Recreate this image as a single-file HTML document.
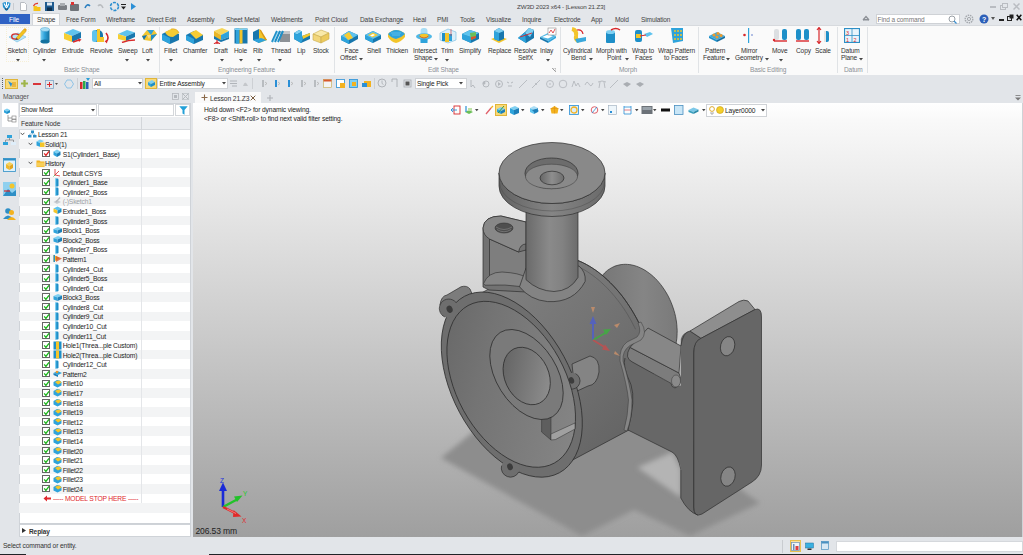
<!DOCTYPE html>
<html><head><meta charset="utf-8">
<style>
*{margin:0;padding:0;box-sizing:border-box}
html,body{width:1023px;height:555px;overflow:hidden;background:#e3e6ea;font-family:"Liberation Sans",sans-serif;position:relative}
.a{position:absolute;display:block}
.t{position:absolute;white-space:nowrap;line-height:7px;font-family:"Liberation Sans",sans-serif}
</style></head><body>
<div class="a" style="left:0px;top:0px;width:1023px;height:13px;background:#e3e6ea;"></div>
<svg class="a" style="left:2px;top:1px;" width="9" height="10" viewBox="0 0 9 10"><path d="M0.5,2 Q4.5,0 8.5,2 L8,6 Q6,9 4.5,10 Q3,9 1,6Z" fill="#1e8fcf"/><path d="M2,2.5 L4.5,7 L7,2.5 M4.5,1 V5" stroke="#fff" stroke-width="1.1" fill="none"/><path d="M3,8 L6,8" stroke="#234" stroke-width="1"/></svg>
<div class="a" style="left:13px;top:3px;width:1px;height:7px;background:#c9ccd0;"></div>
<svg class="a" style="left:20px;top:2px;" width="7" height="9" viewBox="0 0 7 9"><path d="M0.5,0.5 H4.5 L6.5,2.5 V8.5 H0.5Z" fill="#fff" stroke="#b8bcc2" stroke-width="1"/></svg>
<svg class="a" style="left:33px;top:1.5px;" width="8" height="9" viewBox="0 0 8 9"><path d="M0.5,4 H3.5 L4.5,5 H7.5 V9 H0.5Z" fill="#f5c318"/><path d="M0.5,4 Q2,1 5,1.5" stroke="#e03a2a" stroke-width="1.3" fill="none"/></svg>
<svg class="a" style="left:45px;top:2px;" width="9" height="9" viewBox="0 0 9 9"><rect x="0" y="0" width="9" height="9" fill="#1f5b8f"/><rect x="2" y="0.5" width="5" height="3" fill="#dfe8f0"/><rect x="2" y="5.5" width="5" height="3.5" fill="#0e2f4d"/></svg>
<svg class="a" style="left:58px;top:3px;" width="9" height="8" viewBox="0 0 9 8"><rect x="0" y="2" width="9" height="5" rx="1" fill="#7a7e84"/><rect x="2" y="0" width="5" height="3" fill="#a9adb2"/></svg>
<svg class="a" style="left:70px;top:2px;" width="9" height="9" viewBox="0 0 9 9"><rect x="0" y="2" width="9" height="7" rx="1" fill="#6f7379"/><rect x="1" y="0" width="3" height="3" fill="#d33"/></svg>
<svg class="a" style="left:84px;top:3px;" width="7" height="6" viewBox="0 0 7 6"><path d="M1,5 Q3,0 6,3" fill="none" stroke="#2c7fc0" stroke-width="1.6"/></svg>
<svg class="a" style="left:97px;top:3px;" width="7" height="6" viewBox="0 0 7 6"><path d="M6,5 Q4,0 1,3" fill="none" stroke="#b9bcc0" stroke-width="1.6"/></svg>
<svg class="a" style="left:109px;top:1px;" width="11" height="11" viewBox="0 0 11 11"><circle cx="5.5" cy="5.5" r="4" fill="none" stroke="#2d8fd0" stroke-width="1.6" stroke-dasharray="3 1.2"/></svg>
<svg class="a" style="left:121px;top:4px;" width="5" height="6" viewBox="0 0 5 6"><rect x="0" y="0" width="5" height="1" fill="#222"/><path d="M0,2.5 H5 L2.5,5.5Z" fill="#222"/></svg>
<svg class="a" style="left:131px;top:3px;" width="5" height="7" viewBox="0 0 5 7"><path d="M0,0 L5,3.5 L0,7Z" fill="#2a8fd6"/></svg>
<div class="t" style="left:517px;top:2.50px;font-size:6.24px;letter-spacing:-0.12px;color:#444;">ZW3D 2023 x64 - [Lesson 21.Z3]</div>
<div class="a" style="left:990px;top:6px;width:6px;height:2px;background:#fff;border:1px solid #b9bcc1"></div>
<svg class="a" style="left:1000px;top:3px;" width="8" height="7" viewBox="0 0 8 7"><rect x="0.5" y="2.5" width="5" height="4" fill="none" stroke="#b9bcc1"/><rect x="2.5" y="0.5" width="5" height="4" fill="#e3e6ea" stroke="#b9bcc1"/></svg>
<svg class="a" style="left:1013px;top:3px;" width="7" height="7" viewBox="0 0 7 7"><path d="M0.5,0.5 L6.5,6.5 M6.5,0.5 L0.5,6.5" stroke="#b9bcc1" stroke-width="1.5"/></svg>
<div class="a" style="left:0px;top:13.5px;width:30px;height:10.5px;background:#2f62c4;"></div>
<div class="t" style="left:9px;top:16.10px;font-size:6.55px;letter-spacing:-0.12px;color:#ffffff;">File</div>
<div class="a" style="left:32px;top:13px;width:28px;height:12px;background:#fafafa;border:1px solid #d3d6da;border-bottom:none"></div>
<div class="t" style="left:37px;top:16.10px;font-size:6.55px;letter-spacing:-0.12px;color:#333;">Shape</div>
<div class="t" style="left:66px;top:16.10px;font-size:6.55px;letter-spacing:-0.12px;color:#444;">Free Form</div>
<div class="t" style="left:106px;top:16.10px;font-size:6.55px;letter-spacing:-0.12px;color:#444;">Wireframe</div>
<div class="t" style="left:147px;top:16.10px;font-size:6.55px;letter-spacing:-0.12px;color:#444;">Direct Edit</div>
<div class="t" style="left:187px;top:16.10px;font-size:6.55px;letter-spacing:-0.12px;color:#444;">Assembly</div>
<div class="t" style="left:226px;top:16.10px;font-size:6.55px;letter-spacing:-0.12px;color:#444;">Sheet Metal</div>
<div class="t" style="left:271px;top:16.10px;font-size:6.55px;letter-spacing:-0.12px;color:#444;">Weldments</div>
<div class="t" style="left:315px;top:16.10px;font-size:6.55px;letter-spacing:-0.12px;color:#444;">Point Cloud</div>
<div class="t" style="left:360px;top:16.10px;font-size:6.55px;letter-spacing:-0.12px;color:#444;">Data Exchange</div>
<div class="t" style="left:413px;top:16.10px;font-size:6.55px;letter-spacing:-0.12px;color:#444;">Heal</div>
<div class="t" style="left:437px;top:16.10px;font-size:6.55px;letter-spacing:-0.12px;color:#444;">PMI</div>
<div class="t" style="left:460px;top:16.10px;font-size:6.55px;letter-spacing:-0.12px;color:#444;">Tools</div>
<div class="t" style="left:486px;top:16.10px;font-size:6.55px;letter-spacing:-0.12px;color:#444;">Visualize</div>
<div class="t" style="left:522px;top:16.10px;font-size:6.55px;letter-spacing:-0.12px;color:#444;">Inquire</div>
<div class="t" style="left:554px;top:16.10px;font-size:6.55px;letter-spacing:-0.12px;color:#444;">Electrode</div>
<div class="t" style="left:591px;top:16.10px;font-size:6.55px;letter-spacing:-0.12px;color:#444;">App</div>
<div class="t" style="left:615px;top:16.10px;font-size:6.55px;letter-spacing:-0.12px;color:#444;">Mold</div>
<div class="t" style="left:641px;top:16.10px;font-size:6.55px;letter-spacing:-0.12px;color:#444;">Simulation</div>
<svg class="a" style="left:862px;top:15px;" width="8" height="6" viewBox="0 0 8 6"><path d="M1,5 L4,1.5 L7,5" fill="none" stroke="#8b8f95" stroke-width="1.2"/><rect x="1" y="4" width="6" height="1.5" fill="#8b8f95"/></svg>
<div class="a" style="left:875.5px;top:13.5px;width:84px;height:10px;background:#ffffff;border:1px solid #cfd2d6"></div>
<div class="t" style="left:877.5px;top:15.50px;font-size:6.55px;letter-spacing:-0.12px;color:#777;">Find a command</div>
<svg class="a" style="left:948px;top:14.5px;" width="9" height="9" viewBox="0 0 9 9"><circle cx="4" cy="4" r="3" fill="none" stroke="#9aa0a6" stroke-width="1"/><path d="M6,6 L8.5,8.5" stroke="#3b8fd0" stroke-width="1.2"/></svg>
<svg class="a" style="left:964px;top:14px;" width="10" height="10" viewBox="0 0 10 10"><circle cx="5" cy="5" r="3.8" fill="none" stroke="#a5a9ae" stroke-width="1.4" stroke-dasharray="1.5 0.8"/><circle cx="5" cy="5" r="1.6" fill="none" stroke="#a5a9ae"/></svg>
<svg class="a" style="left:979px;top:13.5px;" width="10" height="10" viewBox="0 0 10 10"><circle cx="5" cy="5" r="4.5" fill="#2c5fb8"/><text x="3" y="8" font-size="7" fill="#fff" font-family="Liberation Sans" font-weight="bold">?</text></svg>
<svg class="a" style="left:991px;top:17px;" width="4" height="3" viewBox="0 0 4 3"><path d="M0,0 H4 L2,3Z" fill="#555"/></svg>
<div class="a" style="left:999px;top:19px;width:5px;height:1.6px;background:#222;"></div>
<svg class="a" style="left:1007px;top:14px;" width="7" height="7" viewBox="0 0 7 7"><rect x="0.5" y="2.5" width="4" height="4" fill="none" stroke="#222" stroke-width="1"/><rect x="2.5" y="0.5" width="4" height="4" fill="#222"/></svg>
<svg class="a" style="left:1016px;top:14px;" width="6" height="7" viewBox="0 0 6 7"><path d="M0.7,0.7 L5.3,6.3 M5.3,0.7 L0.7,6.3" stroke="#111" stroke-width="1.5"/></svg>
<div class="a" style="left:0px;top:24.5px;width:1023px;height:50px;background:#fafafa;border-top:1px solid #d7dade"></div>
<div class="a" style="left:6px;top:27px;width:23px;height:35px;background:transparent;border:1px dotted #f6efd6"></div>
<svg class="a" style="left:8px;top:27px;" width="19" height="17" viewBox="0 0 19 17"><polygon points="1,10 10,6 18,10 9,15" fill="#b9e3f6" stroke="#6fb8e0" stroke-width="0.6"/><ellipse cx="7.5" cy="9.5" rx="3.8" ry="2.6" fill="none" stroke="#d8302c" stroke-width="1.4"/><path d="M8,11 L15.5,2.5 L18,4.5 L10.5,12.5Z" fill="#f4c21f" stroke="#b58a10" stroke-width="0.4"/><path d="M15.5,2.5 L17,1 L18.8,2.8 L18,4.5Z" fill="#e9a71a"/><path d="M8,11 L7.5,13 L10.5,12.5Z" fill="#555"/></svg>
<svg class="a" style="left:40px;top:27px;" width="10" height="17" viewBox="0 0 10 17"><defs><linearGradient id="rc" x1="0" x2="1"><stop offset="0" stop-color="#7fd0f2"/><stop offset="0.45" stop-color="#2ea3db"/><stop offset="1" stop-color="#13719f"/></linearGradient></defs><rect x="0.5" y="2.5" width="9" height="12" fill="url(#rc)"/><ellipse cx="5" cy="14.5" rx="4.5" ry="2" fill="#13719f"/><ellipse cx="5" cy="2.5" rx="4.5" ry="2" fill="#a8def5" stroke="#2e8fc6" stroke-width="0.4"/></svg>
<svg class="a" style="left:63px;top:28px;" width="19" height="16" viewBox="0 0 19 16"><polygon points="1,5 10,1 18,4 9,8" fill="#5ec3ee"/><polygon points="1,5 9,8 9,14 1,11" fill="#f6cf34"/><polygon points="9,8 18,4 18,10 9,14" fill="#1877ad"/><path d="M10,14 L16,12" stroke="#d92a2a" stroke-width="1.8"/><path d="M15,10.5 L18.5,11.5 L16,14Z" fill="#d92a2a"/></svg>
<svg class="a" style="left:90px;top:27px;" width="21" height="17" viewBox="0 0 21 17"><rect x="2" y="3" width="11" height="12" rx="5" fill="#1877ad"/><rect x="2" y="3" width="5" height="12" rx="2.5" fill="#5ec3ee"/><path d="M7,2 h3 v8 h4 v5 h-7z" fill="#f4c72b"/><path d="M16,6 Q20,11 16,15" fill="none" stroke="#d8282c" stroke-width="1.6"/><path d="M14.5,14 L17,16.5 L17.5,13Z" fill="#d8282c"/></svg>
<svg class="a" style="left:117px;top:29px;" width="19" height="14" viewBox="0 0 19 14"><polygon points="1,5 10,1 18,3.5 9,7.5" fill="#5ec3ee"/><polygon points="1,5 9,7.5 9,12 1,10" fill="#f6cf34"/><polygon points="9,7.5 18,3.5 18,8 9,12" fill="#1877ad"/><path d="M5,13.5 Q11,11 18,11" stroke="#d92a2a" stroke-width="1.5" fill="none"/></svg>
<svg class="a" style="left:141px;top:28px;" width="17" height="15" viewBox="0 0 17 15"><polygon points="1,8 6,2 13,2 16,6 10,13 3,12" fill="#f2c631"/><polygon points="6,2 13,2 10,7" fill="#2ea3db"/><polygon points="1,8 6,7 3,12" fill="#1877ad"/><polygon points="10,7 16,6 10,13" fill="#1e8fc8"/><polygon points="6,7 10,7 8,11" fill="#f9e08a"/></svg>
<div class="a" style="left:159px;top:27px;width:1px;height:46px;background:#e0e3e6;"></div>
<svg class="a" style="left:161px;top:27px;" width="19" height="17" viewBox="0 0 19 17"><path d="M1,7 L9,3 L18,7 L18,13 L9,17 L1,13Z" fill="#1877ad"/><path d="M1,7 L9,11 L9,17 L1,13Z" fill="#2ea3db"/><path d="M4,5 L10,2 Q16,1 18,6 L12,10 Q6,10 4,5Z" fill="#f6cc34"/><path d="M10,2 Q16,1 18,6" stroke="#d99a12" stroke-width="0.6" fill="none"/></svg>
<svg class="a" style="left:185px;top:28px;" width="19" height="16" viewBox="0 0 19 16"><path d="M1,7 L9,3 L18,7 L18,12 L9,16 L1,12Z" fill="#1877ad"/><path d="M1,7 L9,11 L9,16 L1,12Z" fill="#2ea3db"/><path d="M5,5 L11,2 L18,7 L11,11Z" fill="#f6cc34"/></svg>
<svg class="a" style="left:212px;top:27px;" width="18" height="17" viewBox="0 0 18 17"><polygon points="2,4 10,1 17,4 9,8" fill="#f6d65a"/><polygon points="2,4 9,8 9,13 2,10" fill="#e9b626"/><polygon points="9,8 17,4 17,10 9,13" fill="#2ea3db"/><polygon points="2,9 9,13 17,10 17,12 9,15 2,12" fill="#1877ad"/><path d="M5,13 L5,17 M5,15 L2,17 M5,15 L8,17" stroke="#d8282c" stroke-width="1.1"/></svg>
<svg class="a" style="left:234px;top:28px;" width="14" height="16" viewBox="0 0 14 16"><rect x="0.5" y="0.5" width="13" height="15" fill="#1877ad"/><rect x="2" y="0.5" width="3" height="15" fill="#2ea3db"/><rect x="5.5" y="0.5" width="3" height="15" fill="#f3c52a"/><rect x="0.5" y="0.5" width="13" height="1.5" fill="#7fd0f2"/></svg>
<svg class="a" style="left:252px;top:28px;" width="16" height="16" viewBox="0 0 16 16"><polygon points="1,4 7,1 7,15 1,12" fill="#1877ad"/><polygon points="7,1 15,12 7,15" fill="#f3c52a"/><polygon points="1,12 7,15 15,12 9,10" fill="#2ea3db"/><polygon points="7,1 9,2 15,12 13,12" fill="#d99a12"/></svg>
<svg class="a" style="left:271px;top:29px;" width="19" height="15" viewBox="0 0 19 15"><rect x="9" y="2" width="10" height="11" fill="#8d9196"/><rect x="9" y="2" width="10" height="3" fill="#c4c7cb"/><path d="M1,13 L6,2 M4,13 L9,2 M7,13 L12,2" stroke="#1e8fc8" stroke-width="2"/><path d="M2,13 L7,2" stroke="#7fd0f2" stroke-width="0.6"/></svg>
<svg class="a" style="left:293px;top:28px;" width="18" height="16" viewBox="0 0 18 16"><polygon points="1,5 6,2 9,3.5 9,8 17,5 17,11 8,15 1,11" fill="#1877ad"/><polygon points="1,5 6,2 9,3.5 4,6.5" fill="#7fd0f2"/><polygon points="1,5 4,6.5 4,12.5 1,11" fill="#2ea3db"/><polygon points="9,8 17,5 17,7.5 10,11" fill="#f4c82b"/><polygon points="4,6.5 9,3.5 9,8 10,11 8,15 4,12.5" fill="#2ea3db"/></svg>
<svg class="a" style="left:312px;top:28px;" width="18" height="16" viewBox="0 0 18 16"><polygon points="1,6 9,2 17,5 9,9" fill="#f9e9a8" stroke="#c7a94a" stroke-width="0.6"/><polygon points="1,6 9,9 9,15 1,12" fill="#f2d67a" stroke="#c7a94a" stroke-width="0.6"/><polygon points="9,9 17,5 17,11 9,15" fill="#ecca5c" stroke="#c7a94a" stroke-width="0.6"/></svg>
<div class="a" style="left:334px;top:27px;width:1px;height:46px;background:#e0e3e6;"></div>
<svg class="a" style="left:340px;top:28px;" width="19" height="16" viewBox="0 0 19 16"><path d="M1,8 L9,3 L18,7 L18,11 L9,16 L1,12Z" fill="#1877ad"/><path d="M1,8 L9,12 L9,16 L1,12Z" fill="#2ea3db"/><path d="M1,8 L9,3 L18,7 L9,12Z" fill="#5ec3ee"/><path d="M4,7 L9,4 L13,10 L8,12Z" fill="#f6cc34"/></svg>
<svg class="a" style="left:364px;top:28px;" width="18" height="16" viewBox="0 0 18 16"><path d="M1,7 L9,3 L17,7 L17,11 L9,15 L1,11Z" fill="#1877ad"/><path d="M1,7 L9,11 L9,15 L1,11Z" fill="#2ea3db"/><path d="M1,7 L9,3 L17,7 L9,11Z" fill="#5ec3ee"/><path d="M4,7 L9,4.5 L14,7 L9,9.5Z" fill="#f6cc34"/><path d="M6,7.5 L9,6 L11,7 L8,8.5Z" fill="#fff"/></svg>
<svg class="a" style="left:387px;top:27px;" width="19" height="17" viewBox="0 0 19 17"><path d="M1,7 Q5,3 9,3 Q14,3 18,7 L18,10 Q14,15 9,16 Q4,15 1,10Z" fill="#f3c52a"/><path d="M1,7 Q5,3 9,3 Q14,3 18,7 Q14,11 9,12 Q4,11 1,7Z" fill="#2ea3db"/><path d="M4,6 L14,6 M5,8 L13,8" stroke="#7fd0f2" stroke-width="0.6"/></svg>
<svg class="a" style="left:415px;top:27px;" width="18" height="17" viewBox="0 0 18 17"><rect x="5.5" y="1" width="7" height="15" rx="3" fill="#a8ddf5"/><ellipse cx="9" cy="9.5" rx="8" ry="3.2" fill="#4fb8e6"/><ellipse cx="9" cy="9" rx="4.5" ry="2.2" fill="#f3c52a"/><path d="M4.5,9 Q9,13 13.5,9" stroke="#c0392b" stroke-width="0.7" fill="none"/><rect x="5.5" y="12" width="7" height="4" fill="#2ea3db"/></svg>
<svg class="a" style="left:439px;top:28px;" width="18" height="16" viewBox="0 0 18 16"><polygon points="1,5 9,1 17,4 17,12 9,15 1,12" fill="#dbeef8" stroke="#6fb8e0" stroke-width="0.6"/><rect x="6" y="5" width="4" height="9" fill="#f3c52a"/><rect x="3" y="5" width="3" height="8" fill="#1e8fc8"/><rect x="10" y="6" width="3" height="7" fill="#2ea3db"/><path d="M12,1 V8" stroke="#d8282c" stroke-width="0.6"/></svg>
<svg class="a" style="left:461px;top:28px;" width="19" height="16" viewBox="0 0 19 16"><polygon points="1,6 9,2 18,5 18,11 10,15 1,11" fill="#1877ad"/><polygon points="1,6 10,9 10,15 1,11" fill="#2ea3db"/><polygon points="1,6 9,2 18,5 10,9" fill="#5ec3ee"/><polygon points="9,5 15,4 15,10 10,12" fill="#6bbf59"/><polygon points="10,9 15,8 15,10 10,12" fill="#d9542c"/></svg>
<svg class="a" style="left:490px;top:27px;" width="18" height="17" viewBox="0 0 18 17"><polygon points="1,12 9,9 17,12 9,16" fill="#f3c52a"/><polygon points="4,4 9,1 14,4 14,12 9,14 4,12" fill="#1877ad"/><polygon points="4,4 9,6 9,14 4,12" fill="#2ea3db"/><polygon points="4,4 9,1 14,4 9,6" fill="#7fd0f2"/></svg>
<svg class="a" style="left:517px;top:27px;" width="18" height="17" viewBox="0 0 18 17"><polygon points="1,11 8,5 12,1 17,3 17,11 9,16" fill="#1877ad"/><polygon points="1,11 8,5 9,16" fill="#2ea3db"/><polygon points="12,1 17,3 13,10 8,6" fill="#7fd0f2"/><path d="M3,10 L15,6" stroke="#d8282c" stroke-width="0.9"/></svg>
<svg class="a" style="left:539px;top:27px;" width="18" height="17" viewBox="0 0 18 17"><polygon points="1,10 9,6 17,9 9,14" fill="#4fb8e6"/><polygon points="1,10 9,14 9,16 1,12" fill="#1877ad"/><polygon points="9,14 17,9 17,11 9,16" fill="#2ea3db"/><polygon points="3,10 9,7.5 14,9 9,11.5" fill="#fff"/><rect x="9" y="1" width="8" height="7" fill="#fff" stroke="#777" stroke-width="0.5"/><path d="M10,6 L12,3 L14,6 L16,2" stroke="#d8282c" stroke-width="0.8" fill="none"/></svg>
<svg class="a" style="left:552px;top:68px;" width="4" height="4" viewBox="0 0 4 4"><path d="M0,0 H4 V4Z M1,1 L3,3" fill="none" stroke="#888" stroke-width="0.6"/></svg>
<div class="a" style="left:559.5px;top:27px;width:1px;height:46px;background:#e0e3e6;"></div>
<svg class="a" style="left:569px;top:27px;" width="18" height="17" viewBox="0 0 18 17"><path d="M3,2 Q8,3 7,9 Q6,13 10,14" fill="none" stroke="#f3c52a" stroke-width="4"/><polygon points="6,12 17,10 17,14 8,16" fill="#3aa8dc"/><path d="M8,3 Q13,2 14,7" fill="none" stroke="#d8282c" stroke-width="1.2"/></svg>
<svg class="a" style="left:604px;top:27px;" width="18" height="17" viewBox="0 0 18 17"><rect x="2" y="5" width="9" height="11" rx="1" fill="#1e8fc8"/><ellipse cx="6.5" cy="5" rx="4.5" ry="2" fill="#7fd0f2"/><path d="M7,3 Q12,0 16,3" fill="none" stroke="#d8282c" stroke-width="1.5"/></svg>
<svg class="a" style="left:634px;top:28px;" width="19" height="15" viewBox="0 0 19 15"><rect x="1" y="2" width="7" height="12" rx="2" fill="#1e8fc8"/><rect x="2" y="6" width="5" height="4" fill="#f3c52a"/><polygon points="10,6 16,4 19,6 13,9" fill="#5ec3ee"/><path d="M6,8 L12,7" stroke="#d8282c" stroke-width="1"/></svg>
<svg class="a" style="left:669px;top:27px;" width="16" height="17" viewBox="0 0 16 17"><polygon points="2,1 14,1 14,14 4,16" fill="#2ea3db"/><g fill="#f3c52a"><circle cx="6" cy="4" r="1"/><circle cx="9" cy="4" r="1"/><circle cx="12" cy="4" r="1"/><circle cx="6" cy="8" r="1"/><circle cx="9" cy="8" r="1"/><circle cx="12" cy="8" r="1"/><circle cx="6" cy="12" r="1"/><circle cx="9" cy="12" r="1"/><circle cx="12" cy="12" r="1"/></g></svg>
<div class="a" style="left:698px;top:27px;width:1px;height:46px;background:#e0e3e6;"></div>
<svg class="a" style="left:708px;top:28px;" width="18" height="14" viewBox="0 0 18 14"><polygon points="1,8 9,4 17,8 9,12" fill="#3aa8dc"/><polygon points="1,8 9,12 9,14 1,10" fill="#1e8fc8"/><polygon points="9,12 17,8 17,10 9,14" fill="#176ea0"/><g fill="#f09a2a"><circle cx="6" cy="7" r="1.6"/><circle cx="10" cy="5.5" r="1.6"/><circle cx="9" cy="9" r="1.6"/><circle cx="13" cy="7.5" r="1.6"/></g></svg>
<svg class="a" style="left:742px;top:27px;" width="11" height="17" viewBox="0 0 11 17"><rect x="6" y="1" width="1.2" height="15" fill="#2ea3db"/><circle cx="2.5" cy="8" r="1.3" fill="#d8282c"/><circle cx="10" cy="8" r="1" fill="#9ad"/></svg>
<svg class="a" style="left:772px;top:27px;" width="17" height="17" viewBox="0 0 17 17"><rect x="2" y="2" width="5" height="11" rx="2" fill="#dcdfe2"/><rect x="10" y="2" width="5" height="11" rx="2" fill="#1e8fc8"/><path d="M2,14 L15,14" stroke="#d8282c" stroke-width="1.4"/><circle cx="2" cy="13" r="1.2" fill="#d8282c"/></svg>
<svg class="a" style="left:795px;top:27px;" width="16" height="17" viewBox="0 0 16 17"><rect x="1" y="2" width="5" height="11" rx="2" fill="#1e8fc8"/><rect x="9" y="2" width="5" height="11" rx="2" fill="#1e8fc8"/><path d="M1,14 L14,14" stroke="#d8282c" stroke-width="1.4"/></svg>
<svg class="a" style="left:816px;top:27px;" width="15" height="17" viewBox="0 0 15 17"><path d="M3,1 L3,16 M1,3 L3,0.5 L5,3 M1,14 L3,16.5 L5,14" stroke="#d8282c" stroke-width="1.2" fill="none"/><rect x="8" y="4" width="5" height="11" rx="2" fill="#1e8fc8"/><rect x="8" y="4" width="2" height="11" fill="#e6e6e6"/></svg>
<div class="a" style="left:836.5px;top:27px;width:1px;height:46px;background:#e0e3e6;"></div>
<svg class="a" style="left:844px;top:28px;" width="16" height="15" viewBox="0 0 16 15"><rect x="0.5" y="0.5" width="15" height="14" fill="#e8f4fb" stroke="#2e8fc6" stroke-width="1.2"/><path d="M8,1 V14 M1,7.5 H15" stroke="#2e8fc6" stroke-width="0.8"/><text x="2" y="6.5" font-size="5.5" fill="#d8282c" font-family="Liberation Sans">3</text><text x="2" y="13.5" font-size="5.5" fill="#d8282c" font-family="Liberation Sans">1</text><text x="9.5" y="13.5" font-size="5.5" fill="#d8282c" font-family="Liberation Sans">2</text></svg>
<div class="a" style="left:866.5px;top:27px;width:1px;height:46px;background:#e0e3e6;"></div>
<div class="t" style="left:7.5px;top:46.80px;font-size:6.55px;letter-spacing:-0.12px;color:#333333;">Sketch</div>
<div class="t" style="left:33px;top:46.80px;font-size:6.55px;letter-spacing:-0.12px;color:#333333;">Cylinder</div>
<div class="t" style="left:62px;top:46.80px;font-size:6.55px;letter-spacing:-0.12px;color:#333333;">Extrude</div>
<div class="t" style="left:90px;top:46.80px;font-size:6.55px;letter-spacing:-0.12px;color:#333333;">Revolve</div>
<div class="t" style="left:118px;top:46.80px;font-size:6.55px;letter-spacing:-0.12px;color:#333333;">Sweep</div>
<div class="t" style="left:142px;top:46.80px;font-size:6.55px;letter-spacing:-0.12px;color:#333333;">Loft</div>
<div class="t" style="left:164px;top:46.80px;font-size:6.55px;letter-spacing:-0.12px;color:#333333;">Fillet</div>
<div class="t" style="left:183px;top:46.80px;font-size:6.55px;letter-spacing:-0.12px;color:#333333;">Chamfer</div>
<div class="t" style="left:214px;top:46.80px;font-size:6.55px;letter-spacing:-0.12px;color:#333333;">Draft</div>
<div class="t" style="left:234px;top:46.80px;font-size:6.55px;letter-spacing:-0.12px;color:#333333;">Hole</div>
<div class="t" style="left:253px;top:46.80px;font-size:6.55px;letter-spacing:-0.12px;color:#333333;">Rib</div>
<div class="t" style="left:271px;top:46.80px;font-size:6.55px;letter-spacing:-0.12px;color:#333333;">Thread</div>
<div class="t" style="left:297px;top:46.80px;font-size:6.55px;letter-spacing:-0.12px;color:#333333;">Lip</div>
<div class="t" style="left:313px;top:46.80px;font-size:6.55px;letter-spacing:-0.12px;color:#333333;">Stock</div>
<div class="t" style="left:344.5px;top:46.80px;font-size:6.55px;letter-spacing:-0.12px;color:#333333;">Face</div>
<div class="t" style="left:340px;top:54.30px;font-size:6.55px;letter-spacing:-0.12px;color:#333333;">Offset</div>
<div class="t" style="left:367px;top:46.80px;font-size:6.55px;letter-spacing:-0.12px;color:#333333;">Shell</div>
<div class="t" style="left:386px;top:46.80px;font-size:6.55px;letter-spacing:-0.12px;color:#333333;">Thicken</div>
<div class="t" style="left:413px;top:46.80px;font-size:6.55px;letter-spacing:-0.12px;color:#333333;">Intersect</div>
<div class="t" style="left:414px;top:54.30px;font-size:6.55px;letter-spacing:-0.12px;color:#333333;">Shape</div>
<div class="t" style="left:441px;top:46.80px;font-size:6.55px;letter-spacing:-0.12px;color:#333333;">Trim</div>
<div class="t" style="left:459px;top:46.80px;font-size:6.55px;letter-spacing:-0.12px;color:#333333;">Simplify</div>
<div class="t" style="left:488px;top:46.80px;font-size:6.55px;letter-spacing:-0.12px;color:#333333;">Replace</div>
<div class="t" style="left:514px;top:46.80px;font-size:6.55px;letter-spacing:-0.12px;color:#333333;">Resolve</div>
<div class="t" style="left:518px;top:54.30px;font-size:6.55px;letter-spacing:-0.12px;color:#333333;">SelfX</div>
<div class="t" style="left:540px;top:46.80px;font-size:6.55px;letter-spacing:-0.12px;color:#333333;">Inlay</div>
<div class="t" style="left:563px;top:46.80px;font-size:6.55px;letter-spacing:-0.12px;color:#333333;">Cylindrical</div>
<div class="t" style="left:571px;top:54.30px;font-size:6.55px;letter-spacing:-0.12px;color:#333333;">Bend</div>
<div class="t" style="left:596px;top:46.80px;font-size:6.55px;letter-spacing:-0.12px;color:#333333;">Morph with</div>
<div class="t" style="left:607px;top:54.30px;font-size:6.55px;letter-spacing:-0.12px;color:#333333;">Point</div>
<div class="t" style="left:632px;top:46.80px;font-size:6.55px;letter-spacing:-0.12px;color:#333333;">Wrap to</div>
<div class="t" style="left:635px;top:54.30px;font-size:6.55px;letter-spacing:-0.12px;color:#333333;">Faces</div>
<div class="t" style="left:658px;top:46.80px;font-size:6.55px;letter-spacing:-0.12px;color:#333333;">Wrap Pattern</div>
<div class="t" style="left:664px;top:54.30px;font-size:6.55px;letter-spacing:-0.12px;color:#333333;">to Faces</div>
<div class="t" style="left:705px;top:46.80px;font-size:6.55px;letter-spacing:-0.12px;color:#333333;">Pattern</div>
<div class="t" style="left:703px;top:54.30px;font-size:6.55px;letter-spacing:-0.12px;color:#333333;">Feature</div>
<div class="t" style="left:741px;top:46.80px;font-size:6.55px;letter-spacing:-0.12px;color:#333333;">Mirror</div>
<div class="t" style="left:735px;top:54.30px;font-size:6.55px;letter-spacing:-0.12px;color:#333333;">Geometry</div>
<div class="t" style="left:772px;top:46.80px;font-size:6.55px;letter-spacing:-0.12px;color:#333333;">Move</div>
<div class="t" style="left:796px;top:46.80px;font-size:6.55px;letter-spacing:-0.12px;color:#333333;">Copy</div>
<div class="t" style="left:815px;top:46.80px;font-size:6.55px;letter-spacing:-0.12px;color:#333333;">Scale</div>
<div class="t" style="left:841px;top:46.80px;font-size:6.55px;letter-spacing:-0.12px;color:#333333;">Datum</div>
<div class="t" style="left:841px;top:54.30px;font-size:6.55px;letter-spacing:-0.12px;color:#333333;">Plane</div>
<svg class="a" style="left:15.5px;top:59px;" width="4" height="3" viewBox="0 0 4 3"><path d="M0,0 H4 L2,2.5Z" fill="#444"/></svg>
<svg class="a" style="left:42px;top:59px;" width="4" height="3" viewBox="0 0 4 3"><path d="M0,0 H4 L2,2.5Z" fill="#444"/></svg>
<svg class="a" style="left:125px;top:59px;" width="4" height="3" viewBox="0 0 4 3"><path d="M0,0 H4 L2,2.5Z" fill="#444"/></svg>
<svg class="a" style="left:145.5px;top:59px;" width="4" height="3" viewBox="0 0 4 3"><path d="M0,0 H4 L2,2.5Z" fill="#444"/></svg>
<svg class="a" style="left:169px;top:59px;" width="4" height="3" viewBox="0 0 4 3"><path d="M0,0 H4 L2,2.5Z" fill="#444"/></svg>
<svg class="a" style="left:219.5px;top:59px;" width="4" height="3" viewBox="0 0 4 3"><path d="M0,0 H4 L2,2.5Z" fill="#444"/></svg>
<svg class="a" style="left:239px;top:59px;" width="4" height="3" viewBox="0 0 4 3"><path d="M0,0 H4 L2,2.5Z" fill="#444"/></svg>
<svg class="a" style="left:257px;top:59px;" width="4" height="3" viewBox="0 0 4 3"><path d="M0,0 H4 L2,2.5Z" fill="#444"/></svg>
<svg class="a" style="left:278px;top:59px;" width="4" height="3" viewBox="0 0 4 3"><path d="M0,0 H4 L2,2.5Z" fill="#444"/></svg>
<svg class="a" style="left:359px;top:57.5px;" width="4" height="3" viewBox="0 0 4 3"><path d="M0,0 H4 L2,2.5Z" fill="#444"/></svg>
<svg class="a" style="left:434px;top:57.5px;" width="4" height="3" viewBox="0 0 4 3"><path d="M0,0 H4 L2,2.5Z" fill="#444"/></svg>
<svg class="a" style="left:445px;top:59px;" width="4" height="3" viewBox="0 0 4 3"><path d="M0,0 H4 L2,2.5Z" fill="#444"/></svg>
<svg class="a" style="left:545.5px;top:59px;" width="4" height="3" viewBox="0 0 4 3"><path d="M0,0 H4 L2,2.5Z" fill="#444"/></svg>
<svg class="a" style="left:589px;top:57.5px;" width="4" height="3" viewBox="0 0 4 3"><path d="M0,0 H4 L2,2.5Z" fill="#444"/></svg>
<svg class="a" style="left:625px;top:57.5px;" width="4" height="3" viewBox="0 0 4 3"><path d="M0,0 H4 L2,2.5Z" fill="#444"/></svg>
<svg class="a" style="left:726px;top:57.5px;" width="4" height="3" viewBox="0 0 4 3"><path d="M0,0 H4 L2,2.5Z" fill="#444"/></svg>
<svg class="a" style="left:765px;top:57.5px;" width="4" height="3" viewBox="0 0 4 3"><path d="M0,0 H4 L2,2.5Z" fill="#444"/></svg>
<svg class="a" style="left:779px;top:59px;" width="4" height="3" viewBox="0 0 4 3"><path d="M0,0 H4 L2,2.5Z" fill="#444"/></svg>
<svg class="a" style="left:858.5px;top:57.5px;" width="4" height="3" viewBox="0 0 4 3"><path d="M0,0 H4 L2,2.5Z" fill="#444"/></svg>
<div class="t" style="left:64px;top:66.30px;font-size:6.55px;letter-spacing:-0.12px;color:#8a8f96;">Basic Shape</div>
<div class="t" style="left:218px;top:66.30px;font-size:6.55px;letter-spacing:-0.12px;color:#8a8f96;">Engineering Feature</div>
<div class="t" style="left:428px;top:66.30px;font-size:6.55px;letter-spacing:-0.12px;color:#8a8f96;">Edit Shape</div>
<div class="t" style="left:619px;top:66.30px;font-size:6.55px;letter-spacing:-0.12px;color:#8a8f96;">Morph</div>
<div class="t" style="left:750px;top:66.30px;font-size:6.55px;letter-spacing:-0.12px;color:#8a8f96;">Basic Editing</div>
<div class="t" style="left:844px;top:66.30px;font-size:6.55px;letter-spacing:-0.12px;color:#8a8f96;">Datum</div>
<div class="a" style="left:0px;top:74.5px;width:1023px;height:17.5px;background:#e2e5e9;"></div>
<div class="a" style="left:2px;top:78px;width:1px;height:1px;background:#5a5e64;"></div>
<div class="a" style="left:2px;top:80px;width:1px;height:1px;background:#5a5e64;"></div>
<div class="a" style="left:2px;top:82px;width:1px;height:1px;background:#5a5e64;"></div>
<div class="a" style="left:2px;top:84px;width:1px;height:1px;background:#5a5e64;"></div>
<div class="a" style="left:2px;top:86px;width:1px;height:1px;background:#5a5e64;"></div>
<div class="a" style="left:2px;top:88px;width:1px;height:1px;background:#5a5e64;"></div>
<div class="a" style="left:5px;top:78.5px;width:13px;height:10.5px;background:#f9d977;border:1px solid #e0b53a"></div>
<svg class="a" style="left:7px;top:80px;" width="10" height="8" viewBox="0 0 10 8"><path d="M1,1 L4,7 L5,4 L8,5Z" fill="#2a8fd6"/><rect x="5" y="2" width="4" height="5" fill="#e8a92a" opacity="0.7"/></svg>
<svg class="a" style="left:20px;top:79px;" width="9" height="9" viewBox="0 0 9 9"><path d="M4.5,1 V8 M1,4.5 H8" stroke="#9fb54a" stroke-width="2.2"/></svg>
<div class="a" style="left:33px;top:82.5px;width:8px;height:2px;background:#d8363a;"></div>
<svg class="a" style="left:45px;top:79px;" width="13" height="10" viewBox="0 0 13 10"><rect x="0.5" y="1.5" width="8" height="8" fill="none" stroke="#7fa6c8" stroke-width="0.8"/><path d="M4.5,3 V8 M2,5.5 H7" stroke="#d8282c" stroke-width="1"/><path d="M10,4 H13 L11.5,6Z" fill="#555"/></svg>
<svg class="a" style="left:64px;top:79px;" width="10" height="10" viewBox="0 0 10 10"><polygon points="3,1 7,1 9.5,5 7,9 3,9 0.5,5" fill="none" stroke="#8fc3e6" stroke-width="1"/></svg>
<div class="a" style="left:77px;top:78px;width:1px;height:11px;background:#cdd0d4;"></div>
<svg class="a" style="left:80px;top:78px;" width="10" height="11" viewBox="0 0 10 11"><rect x="0" y="4" width="2.5" height="7" fill="#d8282c"/><rect x="3" y="3" width="2.5" height="8" fill="#2eaa4a"/><rect x="6" y="4" width="2.5" height="7" fill="#2c5fb8"/><path d="M6,0 H10 L8,3Z" fill="#2a9fd6"/></svg>
<div class="a" style="left:92px;top:77.5px;width:51px;height:11.5px;background:#fff;border:1px solid #cfd2d6"></div>
<div class="t" style="left:94px;top:80.00px;font-size:6.55px;letter-spacing:-0.12px;color:#222;">All</div>
<svg class="a" style="left:138px;top:82px;" width="4" height="3" viewBox="0 0 4 3"><path d="M0,0 H4 L2,2.5Z" fill="#444"/></svg>
<div class="a" style="left:145px;top:77.5px;width:12px;height:11.5px;background:#f9d977;border:1px solid #e0b53a"></div>
<svg class="a" style="left:147px;top:79px;" width="9" height="9" viewBox="0 0 9 9"><polygon points="1,3 5,1 8,3 4,5" fill="#7fd0f2"/><polygon points="1,3 4,5 4,8 1,6" fill="#2ea3db"/><polygon points="4,5 8,3 8,6 4,8" fill="#1e8fc8"/></svg>
<div class="a" style="left:157px;top:77.5px;width:71px;height:11.5px;background:#fff;border:1px solid #cfd2d6"></div>
<div class="t" style="left:159.5px;top:80.00px;font-size:6.55px;letter-spacing:-0.12px;color:#222;">Entire Assembly</div>
<svg class="a" style="left:222px;top:82px;" width="4" height="3" viewBox="0 0 4 3"><path d="M0,0 H4 L2,2.5Z" fill="#444"/></svg>
<svg class="a" style="left:229px;top:78px;" width="9" height="10" viewBox="0 0 9 10"><path d="M1,3 H8 M1,5.5 H8 M3,8 H8" stroke="#b0b4b9" stroke-width="1"/></svg>
<svg class="a" style="left:241px;top:78px;" width="9" height="10" viewBox="0 0 9 10"><path d="M2,8 Q4,1 7,8Z" fill="#c4c7cb"/></svg>
<div class="a" style="left:252px;top:78px;width:1px;height:11px;background:#cdd0d4;"></div>
<svg class="a" style="left:261px;top:79px;" width="7" height="9" viewBox="0 0 7 9"><rect x="1" y="1" width="2" height="7" fill="#b8bcc0"/><path d="M4,3 L6,4.5 L4,6" stroke="#aaa" fill="none" stroke-width="0.7"/></svg>
<svg class="a" style="left:274px;top:79px;" width="7" height="9" viewBox="0 0 7 9"><rect x="1" y="1" width="2" height="7" fill="#2a8fd6"/><path d="M4,3 L6,4.5 L4,6" stroke="#aaa" fill="none" stroke-width="0.7"/></svg>
<svg class="a" style="left:287px;top:79px;" width="7" height="9" viewBox="0 0 7 9"><rect x="1" y="1" width="2" height="7" fill="#2a8fd6"/><path d="M4,3 L6,4.5 L4,6" stroke="#aaa" fill="none" stroke-width="0.7"/></svg>
<svg class="a" style="left:300px;top:79px;" width="7" height="9" viewBox="0 0 7 9"><rect x="1" y="1" width="2" height="7" fill="#b8bcc0"/><path d="M4,3 L6,4.5 L4,6" stroke="#aaa" fill="none" stroke-width="0.7"/></svg>
<svg class="a" style="left:313px;top:79px;" width="7" height="9" viewBox="0 0 7 9"><rect x="1" y="1" width="2" height="7" fill="#b8bcc0"/><path d="M4,3 L6,4.5 L4,6" stroke="#aaa" fill="none" stroke-width="0.7"/></svg>
<svg class="a" style="left:323px;top:79px;" width="9" height="9" viewBox="0 0 9 9"><rect x="0.5" y="0.5" width="8" height="8" fill="#f4f4f4" stroke="#c7a94a" stroke-width="0.6"/><rect x="0.5" y="0.5" width="8" height="2" fill="#d8582c"/></svg>
<svg class="a" style="left:336px;top:79px;" width="9" height="9" viewBox="0 0 9 9"><rect x="0.5" y="0.5" width="8" height="8" fill="#fff" stroke="#2a8fd6" stroke-width="0.8"/><rect x="4" y="4" width="5" height="5" fill="#f3b21f"/></svg>
<svg class="a" style="left:349px;top:79px;" width="9" height="9" viewBox="0 0 9 9"><rect x="0.5" y="0.5" width="8" height="8" fill="#7fd0f2" stroke="#2a8fd6" stroke-width="0.8"/><rect x="3" y="3" width="4" height="4" fill="#f3b21f"/></svg>
<svg class="a" style="left:362px;top:79px;" width="9" height="9" viewBox="0 0 9 9"><rect x="2" y="2" width="7" height="6" fill="#f3b21f"/><rect x="0" y="4" width="5" height="4" fill="#2a8fd6"/></svg>
<div class="a" style="left:374px;top:78px;width:1px;height:11px;background:#cdd0d4;"></div>
<svg class="a" style="left:377px;top:78px;" width="10" height="10" viewBox="0 0 10 10"><circle cx="5" cy="5" r="4" fill="none" stroke="#a9adb2" stroke-width="0.9"/><path d="M5,2.5 V5.5 L6.5,6.5" stroke="#a9adb2" fill="none" stroke-width="0.8"/></svg>
<svg class="a" style="left:391px;top:78px;" width="8" height="10" viewBox="0 0 8 10"><path d="M1,1 H6 V9 M1,1 V4" stroke="#a9adb2" fill="none" stroke-width="0.9"/></svg>
<svg class="a" style="left:403px;top:79px;" width="9" height="9" viewBox="0 0 9 9"><rect x="1" y="1" width="7" height="7" fill="none" stroke="#a9adb2" stroke-width="0.8"/><rect x="2.5" y="2.5" width="4" height="4" fill="#555"/></svg>
<div class="a" style="left:415px;top:77.5px;width:52px;height:11.5px;background:#fff;border:1px solid #cfd2d6"></div>
<div class="t" style="left:417px;top:80.00px;font-size:6.55px;letter-spacing:-0.12px;color:#222;">Single Pick</div>
<svg class="a" style="left:459px;top:82px;" width="4" height="3" viewBox="0 0 4 3"><path d="M0,0 H4 L2,2.5Z" fill="#444"/></svg>
<svg class="a" style="left:469px;top:79px;" width="10" height="10" viewBox="0 0 10 10"><path d="M2,1 L2,8 L4,6 L6,9" stroke="#b5b9be" fill="none" stroke-width="1"/></svg>
<svg class="a" style="left:481px;top:79px;" width="10" height="10" viewBox="0 0 10 10"><circle cx="5" cy="5" r="3" fill="none" stroke="#b5b9be" stroke-width="1"/><circle cx="3" cy="4" r="1.5" fill="#b5b9be"/></svg>
<svg class="a" style="left:494px;top:79px;" width="10" height="10" viewBox="0 0 10 10"><circle cx="5" cy="5" r="3.5" fill="none" stroke="#b5b9be" stroke-width="1"/><path d="M4,3 L7,5 L4,7Z" fill="#b5b9be"/></svg>
<svg class="a" style="left:505px;top:79px;" width="10" height="10" viewBox="0 0 10 10"><path d="M2,3 L4,4 M6,4 L8,3 M3,7 L7,7" stroke="#b5b9be" stroke-width="1"/></svg>
<svg class="a" style="left:518px;top:79px;" width="10" height="10" viewBox="0 0 10 10"><path d="M1,9 L9,1" stroke="#b5b9be" stroke-width="0.9"/></svg>
<svg class="a" style="left:531px;top:79px;" width="10" height="10" viewBox="0 0 10 10"><path d="M1,9 L9,1" stroke="#b5b9be" stroke-width="0.9"/><circle cx="5" cy="5" r="1" fill="#b5b9be"/></svg>
<svg class="a" style="left:545px;top:79px;" width="10" height="10" viewBox="0 0 10 10"><circle cx="5" cy="5" r="3.5" fill="none" stroke="#b5b9be" stroke-width="0.9"/><circle cx="5" cy="5" r="0.8" fill="#b5b9be"/></svg>
<svg class="a" style="left:558px;top:79px;" width="10" height="10" viewBox="0 0 10 10"><circle cx="5" cy="5" r="3.8" fill="none" stroke="#b5b9be" stroke-width="0.9"/></svg>
<svg class="a" style="left:571px;top:79px;" width="10" height="10" viewBox="0 0 10 10"><path d="M1,8 L3,2 L5,7 L7,4 L9,8" stroke="#b5b9be" fill="none" stroke-width="0.9"/></svg>
<svg class="a" style="left:584px;top:79px;" width="10" height="10" viewBox="0 0 10 10"><path d="M1,6 Q3,1 5,5 Q7,9 9,4" stroke="#b5b9be" fill="none" stroke-width="0.9"/></svg>
<svg class="a" style="left:597px;top:79px;" width="10" height="10" viewBox="0 0 10 10"><path d="M1,3 Q5,1 9,3 M3,3 L2,9 M7,3 L8,9" stroke="#b5b9be" fill="none" stroke-width="0.9"/></svg>
<svg class="a" style="left:609px;top:79px;" width="10" height="10" viewBox="0 0 10 10"><path d="M1,9 L9,1" stroke="#b5b9be" stroke-width="0.9"/></svg>
<svg class="a" style="left:622px;top:79px;" width="10" height="10" viewBox="0 0 10 10"><polygon points="1,5 5,3 9,5 5,8" fill="#a9adb2"/></svg>
<svg class="a" style="left:635px;top:79px;" width="10" height="10" viewBox="0 0 10 10"><polygon points="1,5 5,3 9,5 5,8" fill="#a9adb2"/></svg>
<div class="a" style="left:0px;top:92px;width:193px;height:446px;background:#e2e5e9;"></div>
<div class="t" style="left:3px;top:93.30px;font-size:6.76px;letter-spacing:-0.12px;color:#555;">Manager</div>
<svg class="a" style="left:172px;top:93px;" width="7" height="7" viewBox="0 0 7 7"><rect x="0.5" y="0.5" width="6" height="6" fill="none" stroke="#b5b9be" stroke-width="0.8"/><rect x="2" y="2" width="3" height="3" fill="#b5b9be"/></svg>
<svg class="a" style="left:182px;top:93px;" width="7" height="7" viewBox="0 0 7 7"><path d="M0.5,0.5 L6.5,6.5 M6.5,0.5 L0.5,6.5" stroke="#b5b9be" stroke-width="1"/><rect x="0.5" y="0.5" width="6" height="6" fill="none" stroke="#b5b9be" stroke-width="0.6"/></svg>
<div class="a" style="left:1.5px;top:103px;width:16.5px;height:23.5px;background:#ffffff;"></div>
<svg class="a" style="left:3px;top:107px;" width="14" height="16" viewBox="0 0 14 16"><polygon points="1,3 4,1.5 7,3 4,4.5" fill="#7fd0f2"/><polygon points="1,3 4,4.5 4,7 1,5.5" fill="#2ea3db"/><polygon points="4,4.5 7,3 7,5.5 4,7" fill="#1e8fc8"/><path d="M5,8 V14 H9 M5,11 H9" stroke="#777" stroke-width="0.7" fill="none"/><rect x="9" y="9" width="4" height="3" fill="none" stroke="#777" stroke-width="0.6"/><rect x="9" y="12.5" width="4" height="2.5" fill="none" stroke="#777" stroke-width="0.6"/></svg>
<svg class="a" style="left:3px;top:135px;" width="13" height="11" viewBox="0 0 13 11"><rect x="4" y="0" width="5" height="3" fill="#2ea3db"/><rect x="0" y="7" width="5" height="3" fill="#2ea3db"/><rect x="8" y="7" width="5" height="3" fill="#dfeefa"/><path d="M6.5,3 V5 H2.5 V7 M6.5,5 H10.5 V7" stroke="#555" stroke-width="0.5" fill="none"/></svg>
<svg class="a" style="left:3px;top:158px;" width="13" height="14" viewBox="0 0 13 14"><rect x="0.5" y="0.5" width="12" height="13" fill="#dff1fb" stroke="#2e8fc6" stroke-width="0.8"/><rect x="0.5" y="0.5" width="12" height="2" fill="#2e8fc6"/><polygon points="3,6 6.5,4 10,6 6.5,8" fill="#f7d35a"/><polygon points="3,6 6.5,8 6.5,12 3,10" fill="#efb82a"/><polygon points="6.5,8 10,6 10,10 6.5,12" fill="#e3a51e"/></svg>
<svg class="a" style="left:3px;top:182px;" width="13" height="14" viewBox="0 0 13 14"><rect x="0" y="0" width="13" height="14" fill="#8fd0ef"/><circle cx="9" cy="4" r="2.5" fill="#f3c52a"/><polygon points="0,14 5,7 9,11 13,8 13,14" fill="#2e8fc6"/><path d="M1,9 H7" stroke="#d8282c" stroke-width="1.2"/></svg>
<svg class="a" style="left:3px;top:207px;" width="13" height="13" viewBox="0 0 13 13"><circle cx="5" cy="4" r="2.8" fill="#2e8fc6"/><path d="M0,12 Q5,5 10,12Z" fill="#2e8fc6"/><circle cx="8.5" cy="5.5" r="2.5" fill="#f3b21f"/><path d="M4,13 Q8.5,7 13,13Z" fill="#f3b21f"/></svg>
<div class="a" style="left:18.5px;top:103px;width:172px;height:434px;background:#ffffff;border:1px solid #cfd3d8"></div>
<div class="a" style="left:19px;top:104px;width:78px;height:12px;background:#fff;border:1px solid #d4d7db"></div>
<div class="t" style="left:21px;top:106.10px;font-size:6.66px;letter-spacing:-0.12px;color:#222;">Show Most</div>
<svg class="a" style="left:91px;top:109px;" width="4" height="3" viewBox="0 0 4 3"><path d="M0,0 H4 L2,2.5Z" fill="#444"/></svg>
<div class="a" style="left:98px;top:104px;width:76px;height:12px;background:#fff;border:1px solid #d4d7db"></div>
<div class="a" style="left:174.5px;top:104px;width:15.5px;height:12px;background:#fff;border:1px solid #d4d7db"></div>
<svg class="a" style="left:179px;top:105.5px;" width="9" height="9" viewBox="0 0 9 9"><path d="M0.3,0.3 H8.7 L5.5,4 V8.7 L3.5,7.5 V4Z" fill="#22a0d8"/></svg>
<div class="a" style="left:19px;top:117px;width:171px;height:12.5px;background:#eceef1;border-bottom:1px solid #d6d9dd"></div>
<div class="a" style="left:141px;top:117px;width:1px;height:12.5px;background:#d3d6da;"></div>
<div class="t" style="left:21px;top:119.50px;font-size:6.66px;letter-spacing:-0.12px;color:#333;">Feature Node</div>
<div class="a" style="left:19px;top:139.08px;width:171px;height:9.58px;background:#f3f4f5;"></div>
<div class="a" style="left:19px;top:158.24px;width:171px;height:9.58px;background:#f3f4f5;"></div>
<div class="a" style="left:19px;top:177.4px;width:171px;height:9.58px;background:#f3f4f5;"></div>
<div class="a" style="left:19px;top:196.56px;width:171px;height:9.58px;background:#f3f4f5;"></div>
<div class="a" style="left:19px;top:215.72px;width:171px;height:9.58px;background:#f3f4f5;"></div>
<div class="a" style="left:19px;top:234.88px;width:171px;height:9.58px;background:#f3f4f5;"></div>
<div class="a" style="left:19px;top:254.04px;width:171px;height:9.58px;background:#f3f4f5;"></div>
<div class="a" style="left:19px;top:273.2px;width:171px;height:9.58px;background:#f3f4f5;"></div>
<div class="a" style="left:19px;top:292.36px;width:171px;height:9.58px;background:#f3f4f5;"></div>
<div class="a" style="left:19px;top:311.52px;width:171px;height:9.58px;background:#f3f4f5;"></div>
<div class="a" style="left:19px;top:330.68px;width:171px;height:9.58px;background:#f3f4f5;"></div>
<div class="a" style="left:19px;top:349.84px;width:171px;height:9.58px;background:#f3f4f5;"></div>
<div class="a" style="left:19px;top:369.0px;width:171px;height:9.58px;background:#f3f4f5;"></div>
<div class="a" style="left:19px;top:388.16px;width:171px;height:9.58px;background:#f3f4f5;"></div>
<div class="a" style="left:19px;top:407.32px;width:171px;height:9.58px;background:#f3f4f5;"></div>
<div class="a" style="left:19px;top:426.48px;width:171px;height:9.58px;background:#f3f4f5;"></div>
<div class="a" style="left:19px;top:445.64px;width:171px;height:9.58px;background:#f3f4f5;"></div>
<div class="a" style="left:19px;top:464.8px;width:171px;height:9.58px;background:#f3f4f5;"></div>
<div class="a" style="left:19px;top:483.96px;width:171px;height:9.58px;background:#f3f4f5;"></div>
<div class="a" style="left:19px;top:503.12px;width:171px;height:9.58px;background:#f3f4f5;"></div>
<div class="a" style="left:141px;top:129.5px;width:1px;height:373.6px;background:#e4e6e9;"></div>
<svg class="a" style="left:19.5px;top:132.29px;" width="5" height="4" viewBox="0 0 5 4"><path d="M0.6,0.8 L2.5,2.8 L4.4,0.8" stroke="#444" stroke-width="0.9" fill="none"/></svg>
<svg class="a" style="left:28px;top:129.79px;" width="9" height="9" viewBox="0 0 9 9"><rect x="3" y="0.5" width="3" height="2.5" fill="#2e8fc6"/><rect x="0" y="5" width="3.5" height="2.5" fill="#2e8fc6"/><rect x="5" y="5" width="3.5" height="2.5" fill="#2e8fc6"/><path d="M4.5,3 V4 H1.7 V5 M4.5,4 H6.8 V5" stroke="#2e8fc6" stroke-width="0.5" fill="none"/></svg>
<div class="t" style="left:38px;top:131.39px;font-size:6.76px;letter-spacing:-0.12px;color:#1c1c1c;letter-spacing:-0.2px">Lesson 21</div>
<svg class="a" style="left:27.5px;top:141.87px;" width="5" height="4" viewBox="0 0 5 4"><path d="M0.6,0.8 L2.5,2.8 L4.4,0.8" stroke="#444" stroke-width="0.9" fill="none"/></svg>
<svg class="a" style="left:36px;top:139.37px;" width="9" height="9" viewBox="0 0 9 9"><polygon points="0.5,2.5 4,0.5 8,2 4.5,4" fill="#7fd0f2"/><polygon points="0.5,2.5 4.5,4 4.5,8 0.5,6.5" fill="#2ea3db"/><rect x="4" y="3.5" width="4.5" height="4.5" fill="#f3c52a"/></svg>
<div class="t" style="left:45px;top:140.97px;font-size:6.76px;letter-spacing:-0.12px;color:#1c1c1c;letter-spacing:-0.2px">Solid(1)</div>
<div class="a" style="left:42px;top:149.65px;width:7.5px;height:7.5px;background:#fff;border:1px solid #666"></div>
<svg class="a" style="left:42.5px;top:150.14999999999998px;" width="7" height="7" viewBox="0 0 7 7"><path d="M1.2,3.4 L2.9,5.4 L6,1.4" stroke="#e02020" stroke-width="1.3" fill="none"/></svg>
<svg class="a" style="left:53px;top:148.95px;" width="9" height="9" viewBox="0 0 9 9"><polygon points="0.5,2.5 4,0.5 7.5,2.5 4,4.5" fill="#7fd0f2"/><polygon points="0.5,2.5 4,4.5 4,8 0.5,6" fill="#2ea3db"/><polygon points="4,4.5 7.5,2.5 7.5,6 4,8" fill="#1e7fb8"/></svg>
<div class="t" style="left:62.7px;top:150.55px;font-size:6.76px;letter-spacing:-0.12px;color:#1c1c1c;letter-spacing:-0.2px">S1(Cylinder1_Base)</div>
<svg class="a" style="left:27.5px;top:161.03px;" width="5" height="4" viewBox="0 0 5 4"><path d="M0.6,0.8 L2.5,2.8 L4.4,0.8" stroke="#444" stroke-width="0.9" fill="none"/></svg>
<svg class="a" style="left:36px;top:158.53px;" width="9" height="9" viewBox="0 0 9 9"><path d="M0.5,1.5 H3.5 L4.5,2.5 H8.5 V8 H0.5Z" fill="#f3b21f"/><rect x="1" y="3.5" width="7" height="4" fill="#f7cf5a"/></svg>
<div class="t" style="left:45px;top:160.13px;font-size:6.76px;letter-spacing:-0.12px;color:#1c1c1c;letter-spacing:-0.2px">History</div>
<div class="a" style="left:42px;top:168.81px;width:7.5px;height:7.5px;background:#fff;border:1px solid #666"></div>
<svg class="a" style="left:42.5px;top:169.30999999999997px;" width="7" height="7" viewBox="0 0 7 7"><path d="M1.2,3.4 L2.9,5.4 L6,1.4" stroke="#18b418" stroke-width="1.3" fill="none"/></svg>
<svg class="a" style="left:53px;top:168.11px;" width="9" height="9" viewBox="0 0 9 9"><path d="M2,1 V7 L7,8 M2,7 L6,3" stroke="#d8282c" stroke-width="0.8" fill="none"/><path d="M2,7 L0.5,8.5" stroke="#2eaa4a" stroke-width="0.8"/></svg>
<div class="t" style="left:62.7px;top:169.71px;font-size:6.76px;letter-spacing:-0.12px;color:#1c1c1c;letter-spacing:-0.2px">Default CSYS</div>
<div class="a" style="left:42px;top:178.39px;width:7.5px;height:7.5px;background:#fff;border:1px solid #666"></div>
<svg class="a" style="left:42.5px;top:178.89px;" width="7" height="7" viewBox="0 0 7 7"><path d="M1.2,3.4 L2.9,5.4 L6,1.4" stroke="#18b418" stroke-width="1.3" fill="none"/></svg>
<svg class="a" style="left:53px;top:177.69px;" width="9" height="9" viewBox="0 0 9 9"><rect x="2" y="0.5" width="3.5" height="8" rx="1.2" fill="#1e8fc8"/><rect x="2" y="0.5" width="1.2" height="8" fill="#7fd0f2"/></svg>
<div class="t" style="left:62.7px;top:179.29px;font-size:6.76px;letter-spacing:-0.12px;color:#1c1c1c;letter-spacing:-0.2px">Cylinder1_Base</div>
<div class="a" style="left:42px;top:187.97px;width:7.5px;height:7.5px;background:#fff;border:1px solid #666"></div>
<svg class="a" style="left:42.5px;top:188.47px;" width="7" height="7" viewBox="0 0 7 7"><path d="M1.2,3.4 L2.9,5.4 L6,1.4" stroke="#18b418" stroke-width="1.3" fill="none"/></svg>
<svg class="a" style="left:53px;top:187.27px;" width="9" height="9" viewBox="0 0 9 9"><rect x="2" y="0.5" width="3.5" height="8" rx="1.2" fill="#1e8fc8"/><rect x="2" y="0.5" width="1.2" height="8" fill="#7fd0f2"/></svg>
<div class="t" style="left:62.7px;top:188.87px;font-size:6.76px;letter-spacing:-0.12px;color:#1c1c1c;letter-spacing:-0.2px">Cylinder2_Boss</div>
<div class="a" style="left:42px;top:197.55px;width:7.5px;height:7.5px;background:#fff;border:1px solid #666"></div>
<svg class="a" style="left:42.5px;top:198.04999999999998px;" width="7" height="7" viewBox="0 0 7 7"><path d="M1.2,3.4 L2.9,5.4 L6,1.4" stroke="#18b418" stroke-width="1.3" fill="none"/></svg>
<svg class="a" style="left:53px;top:196.85px;" width="9" height="9" viewBox="0 0 9 9"><polygon points="0.5,5 4,3 8,5 4,7" fill="#c9cdd2"/><path d="M3,5 L7,0.5" stroke="#b5b9be" stroke-width="1.2"/></svg>
<div class="t" style="left:62.7px;top:198.45px;font-size:6.76px;letter-spacing:-0.12px;color:#9a9ea3;letter-spacing:-0.2px">(-)Sketch1</div>
<div class="a" style="left:42px;top:207.13px;width:7.5px;height:7.5px;background:#fff;border:1px solid #666"></div>
<svg class="a" style="left:42.5px;top:207.62999999999997px;" width="7" height="7" viewBox="0 0 7 7"><path d="M1.2,3.4 L2.9,5.4 L6,1.4" stroke="#18b418" stroke-width="1.3" fill="none"/></svg>
<svg class="a" style="left:53px;top:206.43px;" width="9" height="9" viewBox="0 0 9 9"><polygon points="0.5,2.5 4.5,0.5 8.5,2.5 4.5,4.5" fill="#5ec3ee"/><polygon points="0.5,2.5 4.5,4.5 4.5,8 0.5,6" fill="#f3c52a"/><polygon points="4.5,4.5 8.5,2.5 8.5,6 4.5,8" fill="#1e8fc8"/></svg>
<div class="t" style="left:62.7px;top:208.03px;font-size:6.76px;letter-spacing:-0.12px;color:#1c1c1c;letter-spacing:-0.2px">Extrude1_Boss</div>
<div class="a" style="left:42px;top:216.71px;width:7.5px;height:7.5px;background:#fff;border:1px solid #666"></div>
<svg class="a" style="left:42.5px;top:217.20999999999998px;" width="7" height="7" viewBox="0 0 7 7"><path d="M1.2,3.4 L2.9,5.4 L6,1.4" stroke="#18b418" stroke-width="1.3" fill="none"/></svg>
<svg class="a" style="left:53px;top:216.01px;" width="9" height="9" viewBox="0 0 9 9"><rect x="2" y="0.5" width="3.5" height="8" rx="1.2" fill="#1e8fc8"/><rect x="2" y="0.5" width="1.2" height="8" fill="#7fd0f2"/></svg>
<div class="t" style="left:62.7px;top:217.61px;font-size:6.76px;letter-spacing:-0.12px;color:#1c1c1c;letter-spacing:-0.2px">Cylinder3_Boss</div>
<div class="a" style="left:42px;top:226.29px;width:7.5px;height:7.5px;background:#fff;border:1px solid #666"></div>
<svg class="a" style="left:42.5px;top:226.79px;" width="7" height="7" viewBox="0 0 7 7"><path d="M1.2,3.4 L2.9,5.4 L6,1.4" stroke="#18b418" stroke-width="1.3" fill="none"/></svg>
<svg class="a" style="left:53px;top:225.59px;" width="9" height="9" viewBox="0 0 9 9"><polygon points="0.5,3 5,1 9,2.5 4.5,4.5" fill="#7fd0f2"/><polygon points="0.5,3 4.5,4.5 4.5,8 0.5,6.5" fill="#2ea3db"/><polygon points="4.5,4.5 9,2.5 9,6 4.5,8" fill="#1e7fb8"/></svg>
<div class="t" style="left:62.7px;top:227.19px;font-size:6.76px;letter-spacing:-0.12px;color:#1c1c1c;letter-spacing:-0.2px">Block1_Boss</div>
<div class="a" style="left:42px;top:235.87px;width:7.5px;height:7.5px;background:#fff;border:1px solid #666"></div>
<svg class="a" style="left:42.5px;top:236.36999999999998px;" width="7" height="7" viewBox="0 0 7 7"><path d="M1.2,3.4 L2.9,5.4 L6,1.4" stroke="#18b418" stroke-width="1.3" fill="none"/></svg>
<svg class="a" style="left:53px;top:235.17px;" width="9" height="9" viewBox="0 0 9 9"><polygon points="0.5,3 5,1 9,2.5 4.5,4.5" fill="#7fd0f2"/><polygon points="0.5,3 4.5,4.5 4.5,8 0.5,6.5" fill="#2ea3db"/><polygon points="4.5,4.5 9,2.5 9,6 4.5,8" fill="#1e7fb8"/></svg>
<div class="t" style="left:62.7px;top:236.77px;font-size:6.76px;letter-spacing:-0.12px;color:#1c1c1c;letter-spacing:-0.2px">Block2_Boss</div>
<div class="a" style="left:42px;top:245.45px;width:7.5px;height:7.5px;background:#fff;border:1px solid #666"></div>
<svg class="a" style="left:42.5px;top:245.95px;" width="7" height="7" viewBox="0 0 7 7"><path d="M1.2,3.4 L2.9,5.4 L6,1.4" stroke="#18b418" stroke-width="1.3" fill="none"/></svg>
<svg class="a" style="left:53px;top:244.75px;" width="9" height="9" viewBox="0 0 9 9"><rect x="2" y="0.5" width="3.5" height="8" rx="1.2" fill="#1e8fc8"/><rect x="2" y="0.5" width="1.2" height="8" fill="#7fd0f2"/></svg>
<div class="t" style="left:62.7px;top:246.35px;font-size:6.76px;letter-spacing:-0.12px;color:#1c1c1c;letter-spacing:-0.2px">Cylinder7_Boss</div>
<div class="a" style="left:42px;top:255.03px;width:7.5px;height:7.5px;background:#fff;border:1px solid #666"></div>
<svg class="a" style="left:42.5px;top:255.53000000000003px;" width="7" height="7" viewBox="0 0 7 7"><path d="M1.2,3.4 L2.9,5.4 L6,1.4" stroke="#18b418" stroke-width="1.3" fill="none"/></svg>
<svg class="a" style="left:53px;top:254.33px;" width="9" height="9" viewBox="0 0 9 9"><path d="M0.5,1 L7,4 L0.5,8Z" fill="#f3b21f"/><path d="M3,2 L9,4.5 L3,8Z" fill="#d8582c" opacity="0.8"/><rect x="0.5" y="1" width="1.5" height="7" fill="#2e8fc6"/></svg>
<div class="t" style="left:62.7px;top:255.93px;font-size:6.76px;letter-spacing:-0.12px;color:#1c1c1c;letter-spacing:-0.2px">Pattern1</div>
<div class="a" style="left:42px;top:264.61px;width:7.5px;height:7.5px;background:#fff;border:1px solid #666"></div>
<svg class="a" style="left:42.5px;top:265.11px;" width="7" height="7" viewBox="0 0 7 7"><path d="M1.2,3.4 L2.9,5.4 L6,1.4" stroke="#18b418" stroke-width="1.3" fill="none"/></svg>
<svg class="a" style="left:53px;top:263.91px;" width="9" height="9" viewBox="0 0 9 9"><rect x="2" y="0.5" width="3.5" height="8" rx="1.2" fill="#1e8fc8"/><rect x="2" y="0.5" width="1.2" height="8" fill="#7fd0f2"/></svg>
<div class="t" style="left:62.7px;top:265.51px;font-size:6.76px;letter-spacing:-0.12px;color:#1c1c1c;letter-spacing:-0.2px">Cylinder4_Cut</div>
<div class="a" style="left:42px;top:274.19px;width:7.5px;height:7.5px;background:#fff;border:1px solid #666"></div>
<svg class="a" style="left:42.5px;top:274.69px;" width="7" height="7" viewBox="0 0 7 7"><path d="M1.2,3.4 L2.9,5.4 L6,1.4" stroke="#18b418" stroke-width="1.3" fill="none"/></svg>
<svg class="a" style="left:53px;top:273.49px;" width="9" height="9" viewBox="0 0 9 9"><rect x="2" y="0.5" width="3.5" height="8" rx="1.2" fill="#1e8fc8"/><rect x="2" y="0.5" width="1.2" height="8" fill="#7fd0f2"/></svg>
<div class="t" style="left:62.7px;top:275.09px;font-size:6.76px;letter-spacing:-0.12px;color:#1c1c1c;letter-spacing:-0.2px">Cylinder5_Boss</div>
<div class="a" style="left:42px;top:283.77px;width:7.5px;height:7.5px;background:#fff;border:1px solid #666"></div>
<svg class="a" style="left:42.5px;top:284.27px;" width="7" height="7" viewBox="0 0 7 7"><path d="M1.2,3.4 L2.9,5.4 L6,1.4" stroke="#18b418" stroke-width="1.3" fill="none"/></svg>
<svg class="a" style="left:53px;top:283.07px;" width="9" height="9" viewBox="0 0 9 9"><rect x="2" y="0.5" width="3.5" height="8" rx="1.2" fill="#1e8fc8"/><rect x="2" y="0.5" width="1.2" height="8" fill="#7fd0f2"/></svg>
<div class="t" style="left:62.7px;top:284.67px;font-size:6.76px;letter-spacing:-0.12px;color:#1c1c1c;letter-spacing:-0.2px">Cylinder6_Cut</div>
<div class="a" style="left:42px;top:293.35px;width:7.5px;height:7.5px;background:#fff;border:1px solid #666"></div>
<svg class="a" style="left:42.5px;top:293.85px;" width="7" height="7" viewBox="0 0 7 7"><path d="M1.2,3.4 L2.9,5.4 L6,1.4" stroke="#18b418" stroke-width="1.3" fill="none"/></svg>
<svg class="a" style="left:53px;top:292.65px;" width="9" height="9" viewBox="0 0 9 9"><polygon points="0.5,3 5,1 9,2.5 4.5,4.5" fill="#7fd0f2"/><polygon points="0.5,3 4.5,4.5 4.5,8 0.5,6.5" fill="#2ea3db"/><polygon points="4.5,4.5 9,2.5 9,6 4.5,8" fill="#1e7fb8"/></svg>
<div class="t" style="left:62.7px;top:294.25px;font-size:6.76px;letter-spacing:-0.12px;color:#1c1c1c;letter-spacing:-0.2px">Block3_Boss</div>
<div class="a" style="left:42px;top:302.93px;width:7.5px;height:7.5px;background:#fff;border:1px solid #666"></div>
<svg class="a" style="left:42.5px;top:303.43px;" width="7" height="7" viewBox="0 0 7 7"><path d="M1.2,3.4 L2.9,5.4 L6,1.4" stroke="#18b418" stroke-width="1.3" fill="none"/></svg>
<svg class="a" style="left:53px;top:302.23px;" width="9" height="9" viewBox="0 0 9 9"><rect x="2" y="0.5" width="3.5" height="8" rx="1.2" fill="#1e8fc8"/><rect x="2" y="0.5" width="1.2" height="8" fill="#7fd0f2"/></svg>
<div class="t" style="left:62.7px;top:303.83px;font-size:6.76px;letter-spacing:-0.12px;color:#1c1c1c;letter-spacing:-0.2px">Cylinder8_Cut</div>
<div class="a" style="left:42px;top:312.51px;width:7.5px;height:7.5px;background:#fff;border:1px solid #666"></div>
<svg class="a" style="left:42.5px;top:313.01px;" width="7" height="7" viewBox="0 0 7 7"><path d="M1.2,3.4 L2.9,5.4 L6,1.4" stroke="#18b418" stroke-width="1.3" fill="none"/></svg>
<svg class="a" style="left:53px;top:311.81px;" width="9" height="9" viewBox="0 0 9 9"><rect x="2" y="0.5" width="3.5" height="8" rx="1.2" fill="#1e8fc8"/><rect x="2" y="0.5" width="1.2" height="8" fill="#7fd0f2"/></svg>
<div class="t" style="left:62.7px;top:313.41px;font-size:6.76px;letter-spacing:-0.12px;color:#1c1c1c;letter-spacing:-0.2px">Cylinder9_Cut</div>
<div class="a" style="left:42px;top:322.09px;width:7.5px;height:7.5px;background:#fff;border:1px solid #666"></div>
<svg class="a" style="left:42.5px;top:322.59000000000003px;" width="7" height="7" viewBox="0 0 7 7"><path d="M1.2,3.4 L2.9,5.4 L6,1.4" stroke="#18b418" stroke-width="1.3" fill="none"/></svg>
<svg class="a" style="left:53px;top:321.39px;" width="9" height="9" viewBox="0 0 9 9"><rect x="2" y="0.5" width="3.5" height="8" rx="1.2" fill="#1e8fc8"/><rect x="2" y="0.5" width="1.2" height="8" fill="#7fd0f2"/></svg>
<div class="t" style="left:62.7px;top:322.99px;font-size:6.76px;letter-spacing:-0.12px;color:#1c1c1c;letter-spacing:-0.2px">Cylinder10_Cut</div>
<div class="a" style="left:42px;top:331.67px;width:7.5px;height:7.5px;background:#fff;border:1px solid #666"></div>
<svg class="a" style="left:42.5px;top:332.17px;" width="7" height="7" viewBox="0 0 7 7"><path d="M1.2,3.4 L2.9,5.4 L6,1.4" stroke="#18b418" stroke-width="1.3" fill="none"/></svg>
<svg class="a" style="left:53px;top:330.97px;" width="9" height="9" viewBox="0 0 9 9"><rect x="2" y="0.5" width="3.5" height="8" rx="1.2" fill="#1e8fc8"/><rect x="2" y="0.5" width="1.2" height="8" fill="#7fd0f2"/></svg>
<div class="t" style="left:62.7px;top:332.57px;font-size:6.76px;letter-spacing:-0.12px;color:#1c1c1c;letter-spacing:-0.2px">Cylinder11_Cut</div>
<div class="a" style="left:42px;top:341.25px;width:7.5px;height:7.5px;background:#fff;border:1px solid #666"></div>
<svg class="a" style="left:42.5px;top:341.75px;" width="7" height="7" viewBox="0 0 7 7"><path d="M1.2,3.4 L2.9,5.4 L6,1.4" stroke="#18b418" stroke-width="1.3" fill="none"/></svg>
<svg class="a" style="left:53px;top:340.55px;" width="9" height="9" viewBox="0 0 9 9"><rect x="0.5" y="0.5" width="8" height="8" fill="#1e8fc8"/><rect x="3" y="0.5" width="3" height="8" fill="#f3c52a"/></svg>
<div class="t" style="left:62.7px;top:342.15px;font-size:6.76px;letter-spacing:-0.12px;color:#1c1c1c;letter-spacing:-0.2px">Hole1(Threa...ple Custom)</div>
<div class="a" style="left:42px;top:350.83px;width:7.5px;height:7.5px;background:#fff;border:1px solid #666"></div>
<svg class="a" style="left:42.5px;top:351.33000000000004px;" width="7" height="7" viewBox="0 0 7 7"><path d="M1.2,3.4 L2.9,5.4 L6,1.4" stroke="#18b418" stroke-width="1.3" fill="none"/></svg>
<svg class="a" style="left:53px;top:350.13px;" width="9" height="9" viewBox="0 0 9 9"><rect x="0.5" y="0.5" width="8" height="8" fill="#1e8fc8"/><rect x="3" y="0.5" width="3" height="8" fill="#f3c52a"/></svg>
<div class="t" style="left:62.7px;top:351.73px;font-size:6.76px;letter-spacing:-0.12px;color:#1c1c1c;letter-spacing:-0.2px">Hole2(Threa...ple Custom)</div>
<div class="a" style="left:42px;top:360.41px;width:7.5px;height:7.5px;background:#fff;border:1px solid #666"></div>
<svg class="a" style="left:42.5px;top:360.91px;" width="7" height="7" viewBox="0 0 7 7"><path d="M1.2,3.4 L2.9,5.4 L6,1.4" stroke="#18b418" stroke-width="1.3" fill="none"/></svg>
<svg class="a" style="left:53px;top:359.71px;" width="9" height="9" viewBox="0 0 9 9"><rect x="2" y="0.5" width="3.5" height="8" rx="1.2" fill="#1e8fc8"/><rect x="2" y="0.5" width="1.2" height="8" fill="#7fd0f2"/></svg>
<div class="t" style="left:62.7px;top:361.31px;font-size:6.76px;letter-spacing:-0.12px;color:#1c1c1c;letter-spacing:-0.2px">Cylinder12_Cut</div>
<div class="a" style="left:42px;top:369.99px;width:7.5px;height:7.5px;background:#fff;border:1px solid #666"></div>
<svg class="a" style="left:42.5px;top:370.49px;" width="7" height="7" viewBox="0 0 7 7"><path d="M1.2,3.4 L2.9,5.4 L6,1.4" stroke="#18b418" stroke-width="1.3" fill="none"/></svg>
<svg class="a" style="left:53px;top:369.29px;" width="9" height="9" viewBox="0 0 9 9"><polygon points="0.5,4 4.5,2 9,4 5,6" fill="#2ea3db"/><polygon points="0.5,4 5,6 5,8 0.5,6" fill="#1e7fb8"/><circle cx="4" cy="3" r="1.3" fill="#f09a2a"/></svg>
<div class="t" style="left:62.7px;top:370.89px;font-size:6.76px;letter-spacing:-0.12px;color:#1c1c1c;letter-spacing:-0.2px">Pattern2</div>
<div class="a" style="left:42px;top:379.57px;width:7.5px;height:7.5px;background:#fff;border:1px solid #666"></div>
<svg class="a" style="left:42.5px;top:380.07000000000005px;" width="7" height="7" viewBox="0 0 7 7"><path d="M1.2,3.4 L2.9,5.4 L6,1.4" stroke="#18b418" stroke-width="1.3" fill="none"/></svg>
<svg class="a" style="left:53px;top:378.87px;" width="9" height="9" viewBox="0 0 9 9"><path d="M0.5,3 L4,1 Q7,1 8.5,3 V6.5 L4.5,8.5 L0.5,6.5Z" fill="#2ea3db"/><path d="M2,3 L5,1.5 Q7.5,1.5 8.5,3.5 L5,5.5Z" fill="#f3c52a"/></svg>
<div class="t" style="left:62.7px;top:380.47px;font-size:6.76px;letter-spacing:-0.12px;color:#1c1c1c;letter-spacing:-0.2px">Fillet10</div>
<div class="a" style="left:42px;top:389.15px;width:7.5px;height:7.5px;background:#fff;border:1px solid #666"></div>
<svg class="a" style="left:42.5px;top:389.65000000000003px;" width="7" height="7" viewBox="0 0 7 7"><path d="M1.2,3.4 L2.9,5.4 L6,1.4" stroke="#18b418" stroke-width="1.3" fill="none"/></svg>
<svg class="a" style="left:53px;top:388.45px;" width="9" height="9" viewBox="0 0 9 9"><path d="M0.5,3 L4,1 Q7,1 8.5,3 V6.5 L4.5,8.5 L0.5,6.5Z" fill="#2ea3db"/><path d="M2,3 L5,1.5 Q7.5,1.5 8.5,3.5 L5,5.5Z" fill="#f3c52a"/></svg>
<div class="t" style="left:62.7px;top:390.05px;font-size:6.76px;letter-spacing:-0.12px;color:#1c1c1c;letter-spacing:-0.2px">Fillet17</div>
<div class="a" style="left:42px;top:398.73px;width:7.5px;height:7.5px;background:#fff;border:1px solid #666"></div>
<svg class="a" style="left:42.5px;top:399.23px;" width="7" height="7" viewBox="0 0 7 7"><path d="M1.2,3.4 L2.9,5.4 L6,1.4" stroke="#18b418" stroke-width="1.3" fill="none"/></svg>
<svg class="a" style="left:53px;top:398.03px;" width="9" height="9" viewBox="0 0 9 9"><path d="M0.5,3 L4,1 Q7,1 8.5,3 V6.5 L4.5,8.5 L0.5,6.5Z" fill="#2ea3db"/><path d="M2,3 L5,1.5 Q7.5,1.5 8.5,3.5 L5,5.5Z" fill="#f3c52a"/></svg>
<div class="t" style="left:62.7px;top:399.63px;font-size:6.76px;letter-spacing:-0.12px;color:#1c1c1c;letter-spacing:-0.2px">Fillet18</div>
<div class="a" style="left:42px;top:408.31px;width:7.5px;height:7.5px;background:#fff;border:1px solid #666"></div>
<svg class="a" style="left:42.5px;top:408.81px;" width="7" height="7" viewBox="0 0 7 7"><path d="M1.2,3.4 L2.9,5.4 L6,1.4" stroke="#18b418" stroke-width="1.3" fill="none"/></svg>
<svg class="a" style="left:53px;top:407.61px;" width="9" height="9" viewBox="0 0 9 9"><path d="M0.5,3 L4,1 Q7,1 8.5,3 V6.5 L4.5,8.5 L0.5,6.5Z" fill="#2ea3db"/><path d="M2,3 L5,1.5 Q7.5,1.5 8.5,3.5 L5,5.5Z" fill="#f3c52a"/></svg>
<div class="t" style="left:62.7px;top:409.21px;font-size:6.76px;letter-spacing:-0.12px;color:#1c1c1c;letter-spacing:-0.2px">Fillet19</div>
<div class="a" style="left:42px;top:417.89px;width:7.5px;height:7.5px;background:#fff;border:1px solid #666"></div>
<svg class="a" style="left:42.5px;top:418.39px;" width="7" height="7" viewBox="0 0 7 7"><path d="M1.2,3.4 L2.9,5.4 L6,1.4" stroke="#18b418" stroke-width="1.3" fill="none"/></svg>
<svg class="a" style="left:53px;top:417.19px;" width="9" height="9" viewBox="0 0 9 9"><path d="M0.5,3 L4,1 Q7,1 8.5,3 V6.5 L4.5,8.5 L0.5,6.5Z" fill="#2ea3db"/><path d="M2,3 L5,1.5 Q7.5,1.5 8.5,3.5 L5,5.5Z" fill="#f3c52a"/></svg>
<div class="t" style="left:62.7px;top:418.79px;font-size:6.76px;letter-spacing:-0.12px;color:#1c1c1c;letter-spacing:-0.2px">Fillet12</div>
<div class="a" style="left:42px;top:427.47px;width:7.5px;height:7.5px;background:#fff;border:1px solid #666"></div>
<svg class="a" style="left:42.5px;top:427.97px;" width="7" height="7" viewBox="0 0 7 7"><path d="M1.2,3.4 L2.9,5.4 L6,1.4" stroke="#18b418" stroke-width="1.3" fill="none"/></svg>
<svg class="a" style="left:53px;top:426.77px;" width="9" height="9" viewBox="0 0 9 9"><path d="M0.5,3 L4,1 Q7,1 8.5,3 V6.5 L4.5,8.5 L0.5,6.5Z" fill="#2ea3db"/><path d="M2,3 L5,1.5 Q7.5,1.5 8.5,3.5 L5,5.5Z" fill="#f3c52a"/></svg>
<div class="t" style="left:62.7px;top:428.37px;font-size:6.76px;letter-spacing:-0.12px;color:#1c1c1c;letter-spacing:-0.2px">Fillet13</div>
<div class="a" style="left:42px;top:437.05px;width:7.5px;height:7.5px;background:#fff;border:1px solid #666"></div>
<svg class="a" style="left:42.5px;top:437.55px;" width="7" height="7" viewBox="0 0 7 7"><path d="M1.2,3.4 L2.9,5.4 L6,1.4" stroke="#18b418" stroke-width="1.3" fill="none"/></svg>
<svg class="a" style="left:53px;top:436.35px;" width="9" height="9" viewBox="0 0 9 9"><path d="M0.5,3 L4,1 Q7,1 8.5,3 V6.5 L4.5,8.5 L0.5,6.5Z" fill="#2ea3db"/><path d="M2,3 L5,1.5 Q7.5,1.5 8.5,3.5 L5,5.5Z" fill="#f3c52a"/></svg>
<div class="t" style="left:62.7px;top:437.95px;font-size:6.76px;letter-spacing:-0.12px;color:#1c1c1c;letter-spacing:-0.2px">Fillet14</div>
<div class="a" style="left:42px;top:446.63px;width:7.5px;height:7.5px;background:#fff;border:1px solid #666"></div>
<svg class="a" style="left:42.5px;top:447.13px;" width="7" height="7" viewBox="0 0 7 7"><path d="M1.2,3.4 L2.9,5.4 L6,1.4" stroke="#18b418" stroke-width="1.3" fill="none"/></svg>
<svg class="a" style="left:53px;top:445.93px;" width="9" height="9" viewBox="0 0 9 9"><path d="M0.5,3 L4,1 Q7,1 8.5,3 V6.5 L4.5,8.5 L0.5,6.5Z" fill="#2ea3db"/><path d="M2,3 L5,1.5 Q7.5,1.5 8.5,3.5 L5,5.5Z" fill="#f3c52a"/></svg>
<div class="t" style="left:62.7px;top:447.53px;font-size:6.76px;letter-spacing:-0.12px;color:#1c1c1c;letter-spacing:-0.2px">Fillet20</div>
<div class="a" style="left:42px;top:456.21px;width:7.5px;height:7.5px;background:#fff;border:1px solid #666"></div>
<svg class="a" style="left:42.5px;top:456.71000000000004px;" width="7" height="7" viewBox="0 0 7 7"><path d="M1.2,3.4 L2.9,5.4 L6,1.4" stroke="#18b418" stroke-width="1.3" fill="none"/></svg>
<svg class="a" style="left:53px;top:455.51px;" width="9" height="9" viewBox="0 0 9 9"><path d="M0.5,3 L4,1 Q7,1 8.5,3 V6.5 L4.5,8.5 L0.5,6.5Z" fill="#2ea3db"/><path d="M2,3 L5,1.5 Q7.5,1.5 8.5,3.5 L5,5.5Z" fill="#f3c52a"/></svg>
<div class="t" style="left:62.7px;top:457.11px;font-size:6.76px;letter-spacing:-0.12px;color:#1c1c1c;letter-spacing:-0.2px">Fillet21</div>
<div class="a" style="left:42px;top:465.79px;width:7.5px;height:7.5px;background:#fff;border:1px solid #666"></div>
<svg class="a" style="left:42.5px;top:466.29px;" width="7" height="7" viewBox="0 0 7 7"><path d="M1.2,3.4 L2.9,5.4 L6,1.4" stroke="#18b418" stroke-width="1.3" fill="none"/></svg>
<svg class="a" style="left:53px;top:465.09px;" width="9" height="9" viewBox="0 0 9 9"><path d="M0.5,3 L4,1 Q7,1 8.5,3 V6.5 L4.5,8.5 L0.5,6.5Z" fill="#2ea3db"/><path d="M2,3 L5,1.5 Q7.5,1.5 8.5,3.5 L5,5.5Z" fill="#f3c52a"/></svg>
<div class="t" style="left:62.7px;top:466.69px;font-size:6.76px;letter-spacing:-0.12px;color:#1c1c1c;letter-spacing:-0.2px">Fillet22</div>
<div class="a" style="left:42px;top:475.37px;width:7.5px;height:7.5px;background:#fff;border:1px solid #666"></div>
<svg class="a" style="left:42.5px;top:475.87px;" width="7" height="7" viewBox="0 0 7 7"><path d="M1.2,3.4 L2.9,5.4 L6,1.4" stroke="#18b418" stroke-width="1.3" fill="none"/></svg>
<svg class="a" style="left:53px;top:474.67px;" width="9" height="9" viewBox="0 0 9 9"><path d="M0.5,3 L4,1 Q7,1 8.5,3 V6.5 L4.5,8.5 L0.5,6.5Z" fill="#2ea3db"/><path d="M2,3 L5,1.5 Q7.5,1.5 8.5,3.5 L5,5.5Z" fill="#f3c52a"/></svg>
<div class="t" style="left:62.7px;top:476.27px;font-size:6.76px;letter-spacing:-0.12px;color:#1c1c1c;letter-spacing:-0.2px">Fillet23</div>
<div class="a" style="left:42px;top:484.95px;width:7.5px;height:7.5px;background:#fff;border:1px solid #666"></div>
<svg class="a" style="left:42.5px;top:485.45px;" width="7" height="7" viewBox="0 0 7 7"><path d="M1.2,3.4 L2.9,5.4 L6,1.4" stroke="#18b418" stroke-width="1.3" fill="none"/></svg>
<svg class="a" style="left:53px;top:484.25px;" width="9" height="9" viewBox="0 0 9 9"><path d="M0.5,3 L4,1 Q7,1 8.5,3 V6.5 L4.5,8.5 L0.5,6.5Z" fill="#2ea3db"/><path d="M2,3 L5,1.5 Q7.5,1.5 8.5,3.5 L5,5.5Z" fill="#f3c52a"/></svg>
<div class="t" style="left:62.7px;top:485.85px;font-size:6.76px;letter-spacing:-0.12px;color:#1c1c1c;letter-spacing:-0.2px">Fillet24</div>
<svg class="a" style="left:43px;top:493.83px;" width="9" height="9" viewBox="0 0 9 9"><path d="M0.5,4.5 L4,1.5 V3.5 H8 V5.5 H4 V7.5Z" fill="#e0282e"/></svg>
<div class="t" style="left:53px;top:495.43px;font-size:6.76px;letter-spacing:-0.12px;color:#e0282e;letter-spacing:-0.2px">----- MODEL STOP HERE -----</div>
<div class="a" style="left:19px;top:523px;width:171px;height:1px;background:#cdd1d6;"></div>
<div class="a" style="left:18.5px;top:524px;width:172px;height:13px;background:#ffffff;border:1px solid #cfd3d8"></div>
<svg class="a" style="left:22px;top:528px;" width="4" height="5" viewBox="0 0 4 5"><path d="M0,0 L4,2.5 L0,5Z" fill="#333"/></svg>
<div class="t" style="left:29px;top:527.50px;font-size:6.55px;letter-spacing:-0.12px;color:#333;font-weight:bold">Replay</div>
<div class="a" style="left:193px;top:92px;width:830px;height:10.5px;background:#e2e5e9;"></div>
<div class="a" style="left:195px;top:92px;width:66px;height:11px;background:#fafafa;"></div>
<svg class="a" style="left:201px;top:94px;" width="7" height="7" viewBox="0 0 7 7"><path d="M3.5,0.5 V6.5 M0.5,3.5 H6.5" stroke="#8b6a4b" stroke-width="1.1"/></svg>
<div class="t" style="left:210px;top:95.00px;font-size:6.76px;letter-spacing:-0.12px;color:#333;">Lesson 21.Z3</div>
<svg class="a" style="left:250px;top:94.5px;" width="6" height="6" viewBox="0 0 6 6"><path d="M0.7,0.7 L5.3,5.3 M5.3,0.7 L0.7,5.3" stroke="#6b4a2a" stroke-width="0.9"/></svg>
<svg class="a" style="left:266px;top:93.5px;" width="8" height="8" viewBox="0 0 8 8"><path d="M4,1 V7 M1,4 H7" stroke="#aeb2b7" stroke-width="1.1"/></svg>
<svg class="a" style="left:1015px;top:94.5px;" width="6" height="6" viewBox="0 0 6 6"><rect x="0.5" y="0" width="5" height="0.8" fill="#777"/><path d="M0,2.5 H6 L3,5.5Z" fill="#777"/></svg>
<div class="a" style="left:192.8px;top:102.5px;width:829.2px;height:434px;background:linear-gradient(180deg,#ffffff 0%,#f9f9f9 4%,#e5e5e5 25%,#c9c9c9 55%,#adadad 85%,#9f9f9f 100%)"></div>
<div class="a" style="left:1022px;top:102.5px;width:1px;height:434px;background:#cfd2d6;"></div>
<div class="t" style="left:204px;top:105.80px;font-size:6.66px;letter-spacing:-0.12px;color:#222;">Hold down &lt;F2&gt; for dynamic viewing.</div>
<div class="t" style="left:204px;top:114.50px;font-size:6.66px;letter-spacing:-0.12px;color:#222;">&lt;F8&gt; or &lt;Shift-roll&gt; to find next valid filter setting.</div>
<svg class="a" style="left:451px;top:105px;" width="12" height="11" viewBox="0 0 12 11"><rect x="3" y="1" width="6" height="8" fill="none" stroke="#d8282c" stroke-width="0.9"/><path d="M0,5 H6 M2,3 L0,5 L2,7" stroke="#2a8fd6" stroke-width="0.9" fill="none"/></svg>
<svg class="a" style="left:463px;top:105px;" width="12" height="11" viewBox="0 0 12 11"><polygon points="2,7 6,5 10,7 6,9" fill="#6bbf59"/><path d="M3,1 V7" stroke="#2a8fd6" stroke-width="1.2"/><rect x="5" y="3" width="4" height="3" fill="#bfe3a8"/></svg>
<svg class="a" style="left:485px;top:105px;" width="12" height="11" viewBox="0 0 12 11"><path d="M1,9 L6,3" stroke="#e0606a" stroke-width="1.3"/><path d="M6,3 L8,1" stroke="#f3b21f" stroke-width="1.3"/></svg>
<svg class="a" style="left:509px;top:105px;" width="12" height="11" viewBox="0 0 12 11"><polygon points="1,3 6,1 10,3 5,5" fill="#7fd0f2"/><polygon points="1,3 5,5 5,10 1,8" fill="#2ea3db"/><polygon points="5,5 10,3 10,8 5,10" fill="#1e7fb8"/></svg>
<svg class="a" style="left:529px;top:105px;" width="12" height="11" viewBox="0 0 12 11"><polygon points="1,3 5,1 9,3 5,5" fill="#a9dcf5"/><polygon points="1,3 5,5 5,9 1,7" fill="#5ec3ee"/><polygon points="5,5 9,3 9,7 5,9" fill="#2e8fc6"/><polygon points="3,5 7,4 10,6 6,8" fill="#1e7fb8"/></svg>
<svg class="a" style="left:550px;top:105px;" width="12" height="11" viewBox="0 0 12 11"><polygon points="4.5,1 8.5,3.5 7.5,8.5 1.5,8.5 0.5,3.5" fill="#f3b21f"/><path d="M4.5,1 V8.5 M0.5,3.5 L8.5,3.5" stroke="#d98a12" stroke-width="0.5"/></svg>
<svg class="a" style="left:569px;top:105px;" width="12" height="11" viewBox="0 0 12 11"><rect x="0.5" y="0.5" width="9" height="9" fill="#ddeef8" stroke="#2a8fd6" stroke-width="0.8"/><circle cx="5" cy="5" r="3" fill="none" stroke="#f3b21f" stroke-width="1.3"/></svg>
<svg class="a" style="left:590px;top:105px;" width="12" height="11" viewBox="0 0 12 11"><circle cx="4.5" cy="5" r="3.3" fill="none" stroke="#e0606a" stroke-width="1"/><path d="M2,8 L7,2" stroke="#2a8fd6" stroke-width="0.8"/></svg>
<svg class="a" style="left:608px;top:105px;" width="12" height="11" viewBox="0 0 12 11"><rect x="0.5" y="0.5" width="8" height="9" fill="#eef6fb" stroke="#9ab" stroke-width="0.6"/><rect x="2" y="6" width="2" height="2" fill="#2a8fd6"/></svg>
<svg class="a" style="left:623px;top:105px;" width="12" height="11" viewBox="0 0 12 11"><path d="M1,1 V9 H8 V1 M1,2 H8" stroke="#2a8fd6" stroke-width="0.8" fill="none"/><path d="M1,5 H8" stroke="#e0606a" stroke-width="0.8"/></svg>
<svg class="a" style="left:641px;top:105px;" width="12" height="11" viewBox="0 0 12 11"><rect x="0.5" y="1" width="11" height="8" fill="#6c7278"/><rect x="1.5" y="2" width="9" height="3" fill="#9aa3ab"/></svg>
<svg class="a" style="left:661px;top:105px;" width="12" height="11" viewBox="0 0 12 11"><rect x="0" y="3.5" width="9" height="3" fill="#111"/></svg>
<svg class="a" style="left:674px;top:105px;" width="12" height="11" viewBox="0 0 12 11"><rect x="0.5" y="0.5" width="8.5" height="9" fill="#c9e6f7" stroke="#4a90c0" stroke-width="0.8"/></svg>
<svg class="a" style="left:688px;top:105px;" width="12" height="11" viewBox="0 0 12 11"><polygon points="0.5,5 5.5,2.5 10.5,4.5 5.5,7" fill="#7cc8e8"/><polygon points="0.5,5 5.5,7 5.5,9 0.5,7" fill="#3aa0c0"/><polygon points="5.5,7 10.5,4.5 10.5,6.5 5.5,9" fill="#2a8aa8"/></svg>
<div class="a" style="left:495px;top:104px;width:12px;height:12px;background:#f9d977;border:1px solid #e0b53a"></div>
<svg class="a" style="left:496px;top:105px;" width="10" height="10" viewBox="0 0 10 10"><polygon points="1,4 5,2 9,4 5,6" fill="#7fd0f2"/><polygon points="1,4 5,6 5,9 1,7" fill="#2ea3db"/><polygon points="5,6 9,4 9,7 5,9" fill="#1e7fb8"/><path d="M2,8 L8,1" stroke="#3c9a3c" stroke-width="1"/></svg>
<svg class="a" style="left:475px;top:109px;" width="4" height="3" viewBox="0 0 4 3"><path d="M0,0 H3.5 L1.75,2.2Z" fill="#444"/></svg>
<svg class="a" style="left:521px;top:109px;" width="4" height="3" viewBox="0 0 4 3"><path d="M0,0 H3.5 L1.75,2.2Z" fill="#444"/></svg>
<svg class="a" style="left:541px;top:109px;" width="4" height="3" viewBox="0 0 4 3"><path d="M0,0 H3.5 L1.75,2.2Z" fill="#444"/></svg>
<svg class="a" style="left:560px;top:109px;" width="4" height="3" viewBox="0 0 4 3"><path d="M0,0 H3.5 L1.75,2.2Z" fill="#444"/></svg>
<svg class="a" style="left:581px;top:109px;" width="4" height="3" viewBox="0 0 4 3"><path d="M0,0 H3.5 L1.75,2.2Z" fill="#444"/></svg>
<svg class="a" style="left:601px;top:109px;" width="4" height="3" viewBox="0 0 4 3"><path d="M0,0 H3.5 L1.75,2.2Z" fill="#444"/></svg>
<svg class="a" style="left:635px;top:109px;" width="4" height="3" viewBox="0 0 4 3"><path d="M0,0 H3.5 L1.75,2.2Z" fill="#444"/></svg>
<svg class="a" style="left:653px;top:109px;" width="4" height="3" viewBox="0 0 4 3"><path d="M0,0 H3.5 L1.75,2.2Z" fill="#444"/></svg>
<svg class="a" style="left:701.5px;top:109px;" width="4" height="3" viewBox="0 0 4 3"><path d="M0,0 H3.5 L1.75,2.2Z" fill="#444"/></svg>
<div class="a" style="left:706px;top:104px;width:61px;height:12.5px;background:#fff;border:1px solid #cfd2d6"></div>
<svg class="a" style="left:709px;top:105.5px;" width="6" height="9" viewBox="0 0 6 9"><circle cx="3" cy="3" r="2.4" fill="none" stroke="#d9a21a" stroke-width="0.9"/><path d="M2,6 V8 H4 V6" stroke="#999" stroke-width="0.8" fill="none"/></svg>
<svg class="a" style="left:716px;top:106px;" width="8" height="8" viewBox="0 0 8 8"><circle cx="4" cy="4" r="3.5" fill="#f4cf2a" stroke="#c89a12" stroke-width="0.6"/></svg>
<div class="t" style="left:725px;top:107.00px;font-size:6.66px;letter-spacing:-0.12px;color:#222;">Layer0000</div>
<svg class="a" style="left:761px;top:109px;" width="4" height="3" viewBox="0 0 4 3"><path d="M0,0 H4 L2,2.5Z" fill="#444"/></svg>
<svg class="a" style="left:0;top:0" width="1023" height="555" viewBox="0 0 1023 555"><defs>
<linearGradient id="gStem" x1="0" x2="1" y1="0" y2="0"><stop offset="0" stop-color="#6a6a6a"/><stop offset="0.45" stop-color="#8a8a8a"/><stop offset="0.7" stop-color="#828282"/><stop offset="1" stop-color="#6c6c6c"/></linearGradient>
<linearGradient id="gBand" x1="0" x2="1" y1="0" y2="0"><stop offset="0" stop-color="#626262"/><stop offset="0.5" stop-color="#858585"/><stop offset="1" stop-color="#6a6a6a"/></linearGradient>
<linearGradient id="gBody" x1="0" x2="1" y1="0" y2="1"><stop offset="0" stop-color="#868686"/><stop offset="0.5" stop-color="#747474"/><stop offset="1" stop-color="#5e5e5e"/></linearGradient>
<linearGradient id="gCav" x1="0.1" x2="0.8" y1="0" y2="1"><stop offset="0" stop-color="#666666"/><stop offset="0.35" stop-color="#747474"/><stop offset="1" stop-color="#868686"/></linearGradient>
<linearGradient id="gBore" x1="0" x2="1" y1="0" y2="1"><stop offset="0" stop-color="#5e5e5e"/><stop offset="0.6" stop-color="#7e7e7e"/><stop offset="1" stop-color="#959595"/></linearGradient>
<linearGradient id="gHole" x1="0" x2="1" y1="0" y2="0"><stop offset="0" stop-color="#666"/><stop offset="0.5" stop-color="#8e8e8e"/><stop offset="1" stop-color="#6e6e6e"/></linearGradient>
<linearGradient id="gBoss" x1="0" x2="1" y1="0" y2="0"><stop offset="0" stop-color="#747474"/><stop offset="0.6" stop-color="#858585"/><stop offset="1" stop-color="#7a7a7a"/></linearGradient>
<filter id="blur" x="-10%" y="-10%" width="120%" height="120%"><feGaussianBlur stdDeviation="2.5"/></filter>
</defs><path d="M441.0,458.0 L582.0,536.0 L634.0,510.0 L690.0,536.0 L760.0,503.0 L744.0,492.0 L700.0,450.0 L620.0,400.0 L500.0,410.0Z" fill="#8d8d8d" filter="url(#blur)"/><path d="M637.5,467.5 L672.6,452.0 L681.0,470.0 L681.0,497.6Z" fill="#b4b4b4" filter="url(#blur)"/><path d="M672.1,305.0 L673.1,307.8 L674.0,310.6 L674.8,313.4 L675.5,316.3 L676.0,319.1 L676.5,322.0 L676.8,324.8 L677.0,327.7 L677.2,330.5 L677.1,333.3 L677.0,336.0 L676.8,338.7 L676.4,341.4 L676.0,343.9 L675.4,346.4 L674.7,348.9 L673.9,351.2 L673.0,353.5 L672.0,355.7 L670.9,357.8 L669.7,359.7 L668.3,361.6 L667.0,363.3 L665.5,364.9 L663.9,366.4 L662.3,367.8 L660.5,369.0 L658.7,370.1 L656.9,371.0 L655.0,371.9 L653.0,372.5 L651.0,373.0 L648.9,373.4 L646.8,373.6 L644.7,373.7 L642.5,373.6 L640.3,373.4 L638.1,373.0 L635.9,372.5 L633.7,371.8 L631.5,371.0 L629.3,370.0 L627.1,368.9 L625.0,367.7 L622.9,366.3 L620.8,364.8 L618.7,363.2 L616.7,361.4 L614.7,359.6 L612.8,357.6 L611.0,355.5 L609.2,353.3 L607.5,351.0 L605.9,348.7 L604.3,346.2 L602.8,343.7 L601.4,341.1 L600.2,338.5 L599.0,335.8 L597.9,333.0 L596.9,330.2 L596.0,327.4 L595.2,324.6 L594.5,321.7 L594.0,318.9 L593.5,316.0 L593.2,313.2 L593.0,310.3 L592.8,307.5 L592.9,304.7 L593.0,302.0 L593.2,299.3 L593.6,296.6 L594.0,294.1 L594.6,291.6 L595.3,289.1 L596.1,286.8 L597.0,284.5 L598.0,282.3 L599.1,280.2 L600.3,278.3 L601.7,276.4 L603.0,274.7 L604.5,273.1 L606.1,271.6 L607.7,270.2 L609.5,269.0 L611.3,267.9 L613.1,267.0 L615.0,266.1 L617.0,265.5 L619.0,265.0 L621.1,264.6 L623.2,264.4 L625.3,264.3 L627.5,264.4 L629.7,264.6 L631.9,265.0 L634.1,265.5 L636.3,266.2 L638.5,267.0 L640.7,268.0 L642.9,269.1 L645.0,270.3 L647.1,271.7 L649.2,273.2 L651.3,274.8 L653.3,276.6 L655.3,278.4 L657.2,280.4 L659.0,282.5 L660.8,284.7 L662.5,287.0 L664.1,289.3 L665.7,291.8 L667.2,294.3 L668.6,296.9 L669.8,299.5 L671.0,302.2 L672.1,305.0Z" fill="url(#gBoss)" stroke="#2e2e2e" stroke-width="0.7"/><path d="M444.8,348.3 L444.9,344.2 L445.1,340.2 L445.6,336.2 L446.2,332.5 L447.0,328.8 L448.0,325.4 L449.1,322.0 L450.4,318.9 L451.9,315.9 L453.6,313.1 L455.4,310.5 L457.4,308.2 L459.5,306.0 L461.7,304.0 L464.1,302.3 L466.7,300.8 L541.7,260.8 L544.3,259.5 L547.1,258.5 L550.0,257.6 L553.0,257.1 L556.0,256.7 L559.2,256.6 L562.4,256.8 L565.7,257.2 L569.1,257.8 L572.5,258.7 L575.9,259.8 L579.4,261.1 L582.9,262.7 L586.4,264.5 L589.9,266.5 L593.4,268.7 L596.9,271.1 L600.3,273.8 L603.8,276.6 L607.1,279.6 L610.4,282.8 L613.7,286.1 L616.9,289.7 L620.0,293.3 L623.0,297.1 L625.9,301.1 L628.6,305.1 L631.3,309.3 L633.9,313.6 L636.3,317.9 L638.6,322.4 L640.8,326.8 L642.8,331.4 L644.6,335.9 L646.3,340.5 L647.8,345.1 L649.2,349.7 L650.4,354.3 L651.4,358.9 L652.2,363.4 L652.9,367.9 L653.4,372.3 L653.7,376.6 L653.8,380.9 L653.7,385.0 L653.5,389.0 L653.0,393.0 L652.4,396.7 L651.6,400.4 L650.6,403.9 L649.5,407.2 L648.2,410.3 L646.7,413.3 L645.0,416.1 L643.2,418.7 L641.2,421.0 L639.1,423.2 L636.9,425.2 L634.5,426.9 L631.9,428.4 L556.9,468.4 L554.3,469.7 L551.5,470.7 L548.6,471.6 L545.6,472.1 L542.6,472.5 L539.4,472.6 L536.2,472.4 L532.9,472.0 L529.5,471.4 L526.1,470.5 L522.7,469.4 L519.2,468.1 L515.7,466.5 L512.2,464.7 L508.7,462.7 L505.2,460.5 L501.7,458.1 L498.3,455.4 L494.9,452.6 L491.5,449.6 L488.2,446.4 L484.9,443.1 L481.7,439.5 L478.6,435.9 L475.6,432.1 L472.8,428.1 L469.9,424.1 L467.3,419.9 L464.7,415.6 L462.3,411.3 L460.0,406.8 L457.8,402.4 L455.8,397.8 L454.0,393.2 L452.3,388.7 L450.8,384.1 L449.4,379.5 L448.2,374.9 L447.2,370.3 L446.4,365.8 L445.7,361.3 L445.2,356.9 L444.9,352.6Z" fill="url(#gBody)" stroke="#2e2e2e" stroke-width="0.7"/><path d="M561.3,256.7 L562.7,256.8 L564.2,257.0 L565.6,257.2 L567.1,257.4 L568.5,257.7 L570.0,258.0 L571.5,258.4 L572.9,258.8 L574.4,259.3 L575.9,259.8 L577.4,260.3 L578.9,260.9 L580.4,261.6 L582.0,262.2 L583.5,263.0 L585.0,263.7 L586.5,264.5 L588.0,265.4 L589.6,266.3 L591.1,267.2 L592.6,268.2 L594.1,269.2 L595.6,270.2 L597.1,271.3 L598.6,272.4 L600.1,273.6 L601.6,274.8 L603.1,276.0 L604.5,277.3 L606.0,278.6 L607.5,279.9 L608.9,281.3 L610.3,282.7 L611.7,284.1 L613.1,285.6 L614.5,287.1 L615.9,288.6 L617.3,290.2 L618.6,291.7 L619.9,293.3 L621.3,295.0 L622.6,296.6 L623.8,298.3 L625.1,300.0 L626.3,301.8 L627.5,303.5 L628.7,305.3 L629.9,307.1 L631.1,308.9 L632.2,310.7 L633.3,312.6 L634.4,314.5 L635.4,316.3 L636.5,318.2 L637.5,320.1 L638.5,322.1 L639.4,324.0 L640.3,325.9 L641.2,327.9 L642.1,329.9" fill="none" stroke="#2e2e2e" stroke-width="0.7"/><path d="M565.7,262.1 L567.0,262.4 L568.2,262.8 L569.5,263.2 L570.8,263.6 L572.1,264.0 L573.4,264.5 L574.7,265.0 L576.0,265.6 L577.3,266.2 L578.6,266.8 L579.9,267.4 L581.2,268.1 L582.5,268.8 L583.8,269.5 L585.1,270.3 L586.4,271.1 L587.7,271.9 L589.0,272.8 L590.3,273.7 L591.6,274.6 L592.9,275.5 L594.2,276.5 L595.5,277.5 L596.7,278.5 L598.0,279.5 L599.3,280.6 L600.5,281.7 L601.8,282.9 L603.0,284.0 L604.3,285.2 L605.5,286.4 L606.7,287.6 L607.9,288.8 L609.1,290.1 L610.3,291.4 L611.5,292.7 L612.7,294.1 L613.8,295.4 L615.0,296.8 L616.1,298.2 L617.2,299.6 L618.4,301.0 L619.4,302.5 L620.5,303.9 L621.6,305.4 L622.6,306.9 L623.7,308.4 L624.7,310.0 L625.7,311.5 L626.7,313.1 L627.7,314.7 L628.6,316.3 L629.5,317.9 L630.5,319.5 L631.4,321.1 L632.2,322.7 L633.1,324.4 L633.9,326.0 L634.8,327.7 L635.6,329.3" fill="none" stroke="#4a4a4a" stroke-width="0.5"/><path d="M483,228 Q484,216 501,216 L526,222 L526,292 L489,290 L483,287Z" fill="#727272" stroke="#2e2e2e" stroke-width="0.7"/><path d="M489.5,239 L518.6,252 L526,250 L526,286 L489.5,280Z" fill="#7e7e7e" stroke="#2e2e2e" stroke-width="0.7"/><path d="M483,228 Q484,216 501,216 L526,222 L526,244 Q520,244 518.6,252 L489.5,239 Q483,235 483,228Z" fill="#888888" stroke="#2e2e2e" stroke-width="0.7"/><ellipse cx="504" cy="228" rx="9" ry="5" fill="#4e4e4e" stroke="#333" stroke-width="0.6"/><path d="M496,227 Q504,232 512,227 M497,229.5 Q504,234 511,229.5" fill="none" stroke="#8a8a8a" stroke-width="0.6"/><path d="M483.5,283.6 Q488,272 502,272 Q520,273 525.7,277.4 L525,287 Q505,284 485,285.2Z" fill="#858585" stroke="#2e2e2e" stroke-width="0.6"/><path d="M519.5,286.8 Q530,300 547.6,301.6 Q574,303 585.2,281.3 Q586,272 579,266 L526,268Z" fill="#838383" stroke="#2e2e2e" stroke-width="0.7"/><path d="M526,200 L578,200 L578,277.4 Q570,291 554,291.5 Q538,291 526,279.7Z" fill="url(#gStem)" stroke="#2e2e2e" stroke-width="0.7"/><path d="M499,173 A53,30.5 0 0 0 605,173 L605,186 A53,30.5 0 0 1 499,186Z" fill="url(#gBand)" stroke="#2e2e2e" stroke-width="0.7"/><path d="M499.5,182 A52.5,29 0 0 0 604.5,182" fill="none" stroke="#4a4a4a" stroke-width="0.45"/><ellipse cx="552" cy="173" rx="53" ry="30.5" fill="#898989" stroke="#2e2e2e" stroke-width="0.7"/><ellipse cx="551.5" cy="173.3" rx="26.5" ry="15.3" fill="#6c6c6c" stroke="#2e2e2e" stroke-width="0.7"/><path d="M525.5,176 A26,12.8 0 0 0 577.5,176 A26.5,15.3 0 0 0 578,173.3 A26.5,15.3 0 0 1 525,173.3Z" fill="#888"/><ellipse cx="551.5" cy="176.5" rx="26" ry="12.3" fill="#898989" stroke="#3a3a3a" stroke-width="0.5"/><ellipse cx="552" cy="178" rx="12" ry="6.8" fill="url(#gHole)" stroke="#2e2e2e" stroke-width="0.7"/><path d="M625,358 L632,361.8 L671,383.4 L682,386 L682,470 Q678,455 672,452 L628,430 Q636,400 631,384.8 Q622,365 625,358Z" fill="#676767" stroke="none"/><path d="M681,470 Q678,455 672,452 L628,430 Q636,400 631,384.8 Q622,365 625,358" fill="none" stroke="#2e2e2e" stroke-width="0.7"/><path d="M630,347.4 L679,373 Q684,384 675,388 Q671,387 671,383.4 L632,361.8 Q624,358 630,347.4Z" fill="#7c7c7c" stroke="#2e2e2e" stroke-width="0.7"/><ellipse cx="676" cy="381" rx="4.5" ry="6" fill="#8a8a8a" stroke="#3a3a3a" stroke-width="0.5"/><path d="M648,328 L681,346 L679,373 L630,347.4Z" fill="#878787" stroke="#2e2e2e" stroke-width="0.7"/><path d="M641,322 Q648,333 641,340 L630,345.5 Q622,351 623,361 Q630,385 632,400 Q632,418 627,431 L624,430 Q628,416 628.5,400 Q627,385 620,361 Q619,348 627,342 L637,337 Q642,332 638,323Z" fill="#858585" stroke="#3a3a3a" stroke-width="0.5"/><path d="M680.8,339 Q683,332 690,331 L701,338.3 Q694,343 693.8,353 L693.8,508 Q694,514 698,515 Q688,512 680.8,498Z" fill="#676767" stroke="none"/><path d="M680.8,346 Q683,332 690,331 L701,338.3 Q694,343 693.8,353 L693.8,508 Q694,514 698,515 Q688,512 680.8,498 L680.8,470" fill="none" stroke="#2e2e2e" stroke-width="0.7"/><path d="M690,331 L739,301.5 Q744,299 748,301 L755,309.5 L701,338.3Z" fill="#8e8e8e" stroke="#2e2e2e" stroke-width="0.7"/><path d="M693.8,353 Q693.8,341 701,338.3 L755,309.5 Q761.5,307 761.5,317 L761.5,465 Q761.5,476 752,482 L702,514 Q693.8,518 693.8,507Z" fill="#666666" stroke="#2e2e2e" stroke-width="0.7"/><ellipse cx="727.6" cy="346.2" rx="7" ry="9.8" transform="rotate(15 727.6 346.2)" fill="#858585" stroke="#2e2e2e" stroke-width="0.7"/><ellipse cx="728" cy="476.6" rx="7" ry="9.8" transform="rotate(15 728 476.6)" fill="#858585" stroke="#2e2e2e" stroke-width="0.7"/><path d="M440,305 Q441,296 447,295 L461,286.8 Q467,285 470,289 L473,296 L458,304Z" fill="#7c7c7c" stroke="#2e2e2e" stroke-width="0.7"/><path d="M572,364 L590,356 Q600,358 599,372 Q597,385 588,386 L575,392Z" fill="#848484" stroke="#2e2e2e" stroke-width="0.7"/><ellipse cx="511.8" cy="384.6" rx="59.2" ry="100.2" transform="rotate(-28.3 511.8 384.6)" fill="#6e6e6e" stroke="#2e2e2e" stroke-width="0.75"/><circle cx="448.8" cy="308.5" r="9.4" fill="#6e6e6e"/><path d="M444.8,317.0 A9.4,9.4 0 1 1 456.0,302.5" fill="none" stroke="#2e2e2e" stroke-width="0.7"/><circle cx="510.5" cy="468" r="9.2" fill="#6e6e6e"/><path d="M518.8,471.9 A9.2,9.2 0 0 1 501.6,465.6" fill="none" stroke="#2e2e2e" stroke-width="0.7"/><circle cx="572" cy="381" r="8.2" fill="#6e6e6e"/><path d="M575.5,373.6 A8.2,8.2 0 0 1 569.9,388.9" fill="none" stroke="#2e2e2e" stroke-width="0.7"/><ellipse cx="449.6" cy="309.3" rx="3" ry="3.7" transform="rotate(-20 449.6 309.3)" fill="#3c3c3c"/><ellipse cx="510" cy="466.7" rx="2.8" ry="3.5" transform="rotate(-20 510 466.7)" fill="#3c3c3c"/><ellipse cx="571.5" cy="380.4" rx="2.6" ry="3.4" transform="rotate(-20 571.5 380.4)" fill="#3c3c3c"/><ellipse cx="511.2" cy="384.3" rx="54.4" ry="89.8" transform="rotate(-28.7 511.2 384.3)" fill="url(#gCav)" stroke="#2e2e2e" stroke-width="0.75"/><path d="M541.6,410 L551,406 L551,440 L541.6,432Z" fill="#5e5e5e" stroke="#2e2e2e" stroke-width="0.5"/><path d="M551,434 L575,423 L575,429 L555.4,439.6 L551,440Z" fill="#a0a0a0" stroke="#2e2e2e" stroke-width="0.5"/><ellipse cx="526.5" cy="374.5" rx="30.2" ry="49.6" transform="rotate(-32 526.5 374.5)" fill="#7a7a7a" stroke="#2e2e2e" stroke-width="0.75"/><ellipse cx="526.7" cy="376" rx="22" ry="30" transform="rotate(-25 526.7 376)" fill="url(#gBore)" stroke="#2e2e2e" stroke-width="0.75"/><g opacity="0.85"><path d="M593,340 V322" stroke="#5060c8" stroke-width="2"/><path d="M589.5,324 L593,316 L596.5,324Z" fill="#5060c8"/><path d="M593,340 L607,332" stroke="#3fae3f" stroke-width="1.8"/><path d="M603,329.5 L611,329 L606,335Z" fill="#3fae3f"/><path d="M593,340 L606,348" stroke="#c05050" stroke-width="1.8"/><path d="M602,349.5 L610,351 L605,344.5Z" fill="#c05050"/><path d="M593,313 L591,307 L595,307Z" fill="#c8906a"/><path d="M614,325 L620,323 L617,328Z" fill="#c8906a"/><path d="M614,354 L620,356 L615,351Z" fill="#c8906a"/></g></svg>
<svg class="a" style="left:212px;top:476px;" width="44" height="50" viewBox="0 0 44 50"><path d="M11,31 V14" stroke="#1a2ad8" stroke-width="2.6"/><path d="M7,15 L11,6.5 L15,15Z" fill="#1a2ad8"/><text x="8" y="6.5" font-size="6.5" fill="#2233dd" font-family="Liberation Sans">Z</text><path d="M11,31 L25,23.5" stroke="#22c22a" stroke-width="2.4"/><path d="M22,20.5 L30.5,19.5 L25,26Z" fill="#22c22a"/><text x="31" y="20" font-size="6.5" fill="#22cc22" font-family="Liberation Sans">Y</text><path d="M11,31 L24,37.5" stroke="#e02a2a" stroke-width="2.4"/><path d="M21.5,34 L29.5,40.5 L21,41Z" fill="#e02a2a"/><path d="M15,33 L24,37.5" stroke="#ffb0b0" stroke-width="0.6"/><text x="30" y="46.5" font-size="6.5" fill="#e02a2a" font-family="Liberation Sans">X</text></svg>
<div class="t" style="left:195.5px;top:528.00px;font-size:8.53px;letter-spacing:-0.12px;color:#222;">206.53 mm</div>
<div class="a" style="left:0px;top:536.5px;width:1023px;height:18.5px;background:#e2e5e9;"></div>
<div class="t" style="left:3px;top:542.00px;font-size:6.66px;letter-spacing:-0.12px;color:#333;">Select command or entity.</div>
<div class="a" style="left:781.5px;top:540px;width:1px;height:13px;background:#c9ccd0;"></div>
<div class="a" style="left:789.5px;top:540px;width:11.5px;height:11.5px;background:#f9e3a0;border:1px solid #e8c050"></div>
<svg class="a" style="left:791px;top:541.5px;" width="9" height="9" viewBox="0 0 9 9"><rect x="0.5" y="0.5" width="8" height="8" fill="#eef3f8" stroke="#6a8fb8" stroke-width="0.7"/><rect x="2" y="2" width="1.5" height="6" fill="#6a8fb8"/><rect x="4.5" y="4" width="3" height="4" fill="#e04040"/></svg>
<svg class="a" style="left:805px;top:541.5px;" width="9" height="9" viewBox="0 0 9 9"><rect x="0.5" y="1" width="8" height="5" fill="#3ab0e0" stroke="#1f6f9f" stroke-width="0.5"/><rect x="2.5" y="6.5" width="4" height="1.5" fill="#333"/></svg>
<svg class="a" style="left:821px;top:541px;" width="8" height="9" viewBox="0 0 8 9"><rect x="0.5" y="0.5" width="7" height="8" fill="#d8e8f4" stroke="#4a90c0" stroke-width="0.7"/><rect x="0.5" y="0.5" width="7" height="2" fill="#4a90c0"/></svg>
<div class="a" style="left:836px;top:540.5px;width:187px;height:11px;background:#ffffff;border:1px solid #d5d8dc"></div>
<div class="a" style="left:0px;top:553.5px;width:26px;height:1.5px;background:#1f2226;"></div>
<div class="a" style="left:209px;top:553.5px;width:814px;height:1.5px;background:#1f2226;"></div>
</body></html>
